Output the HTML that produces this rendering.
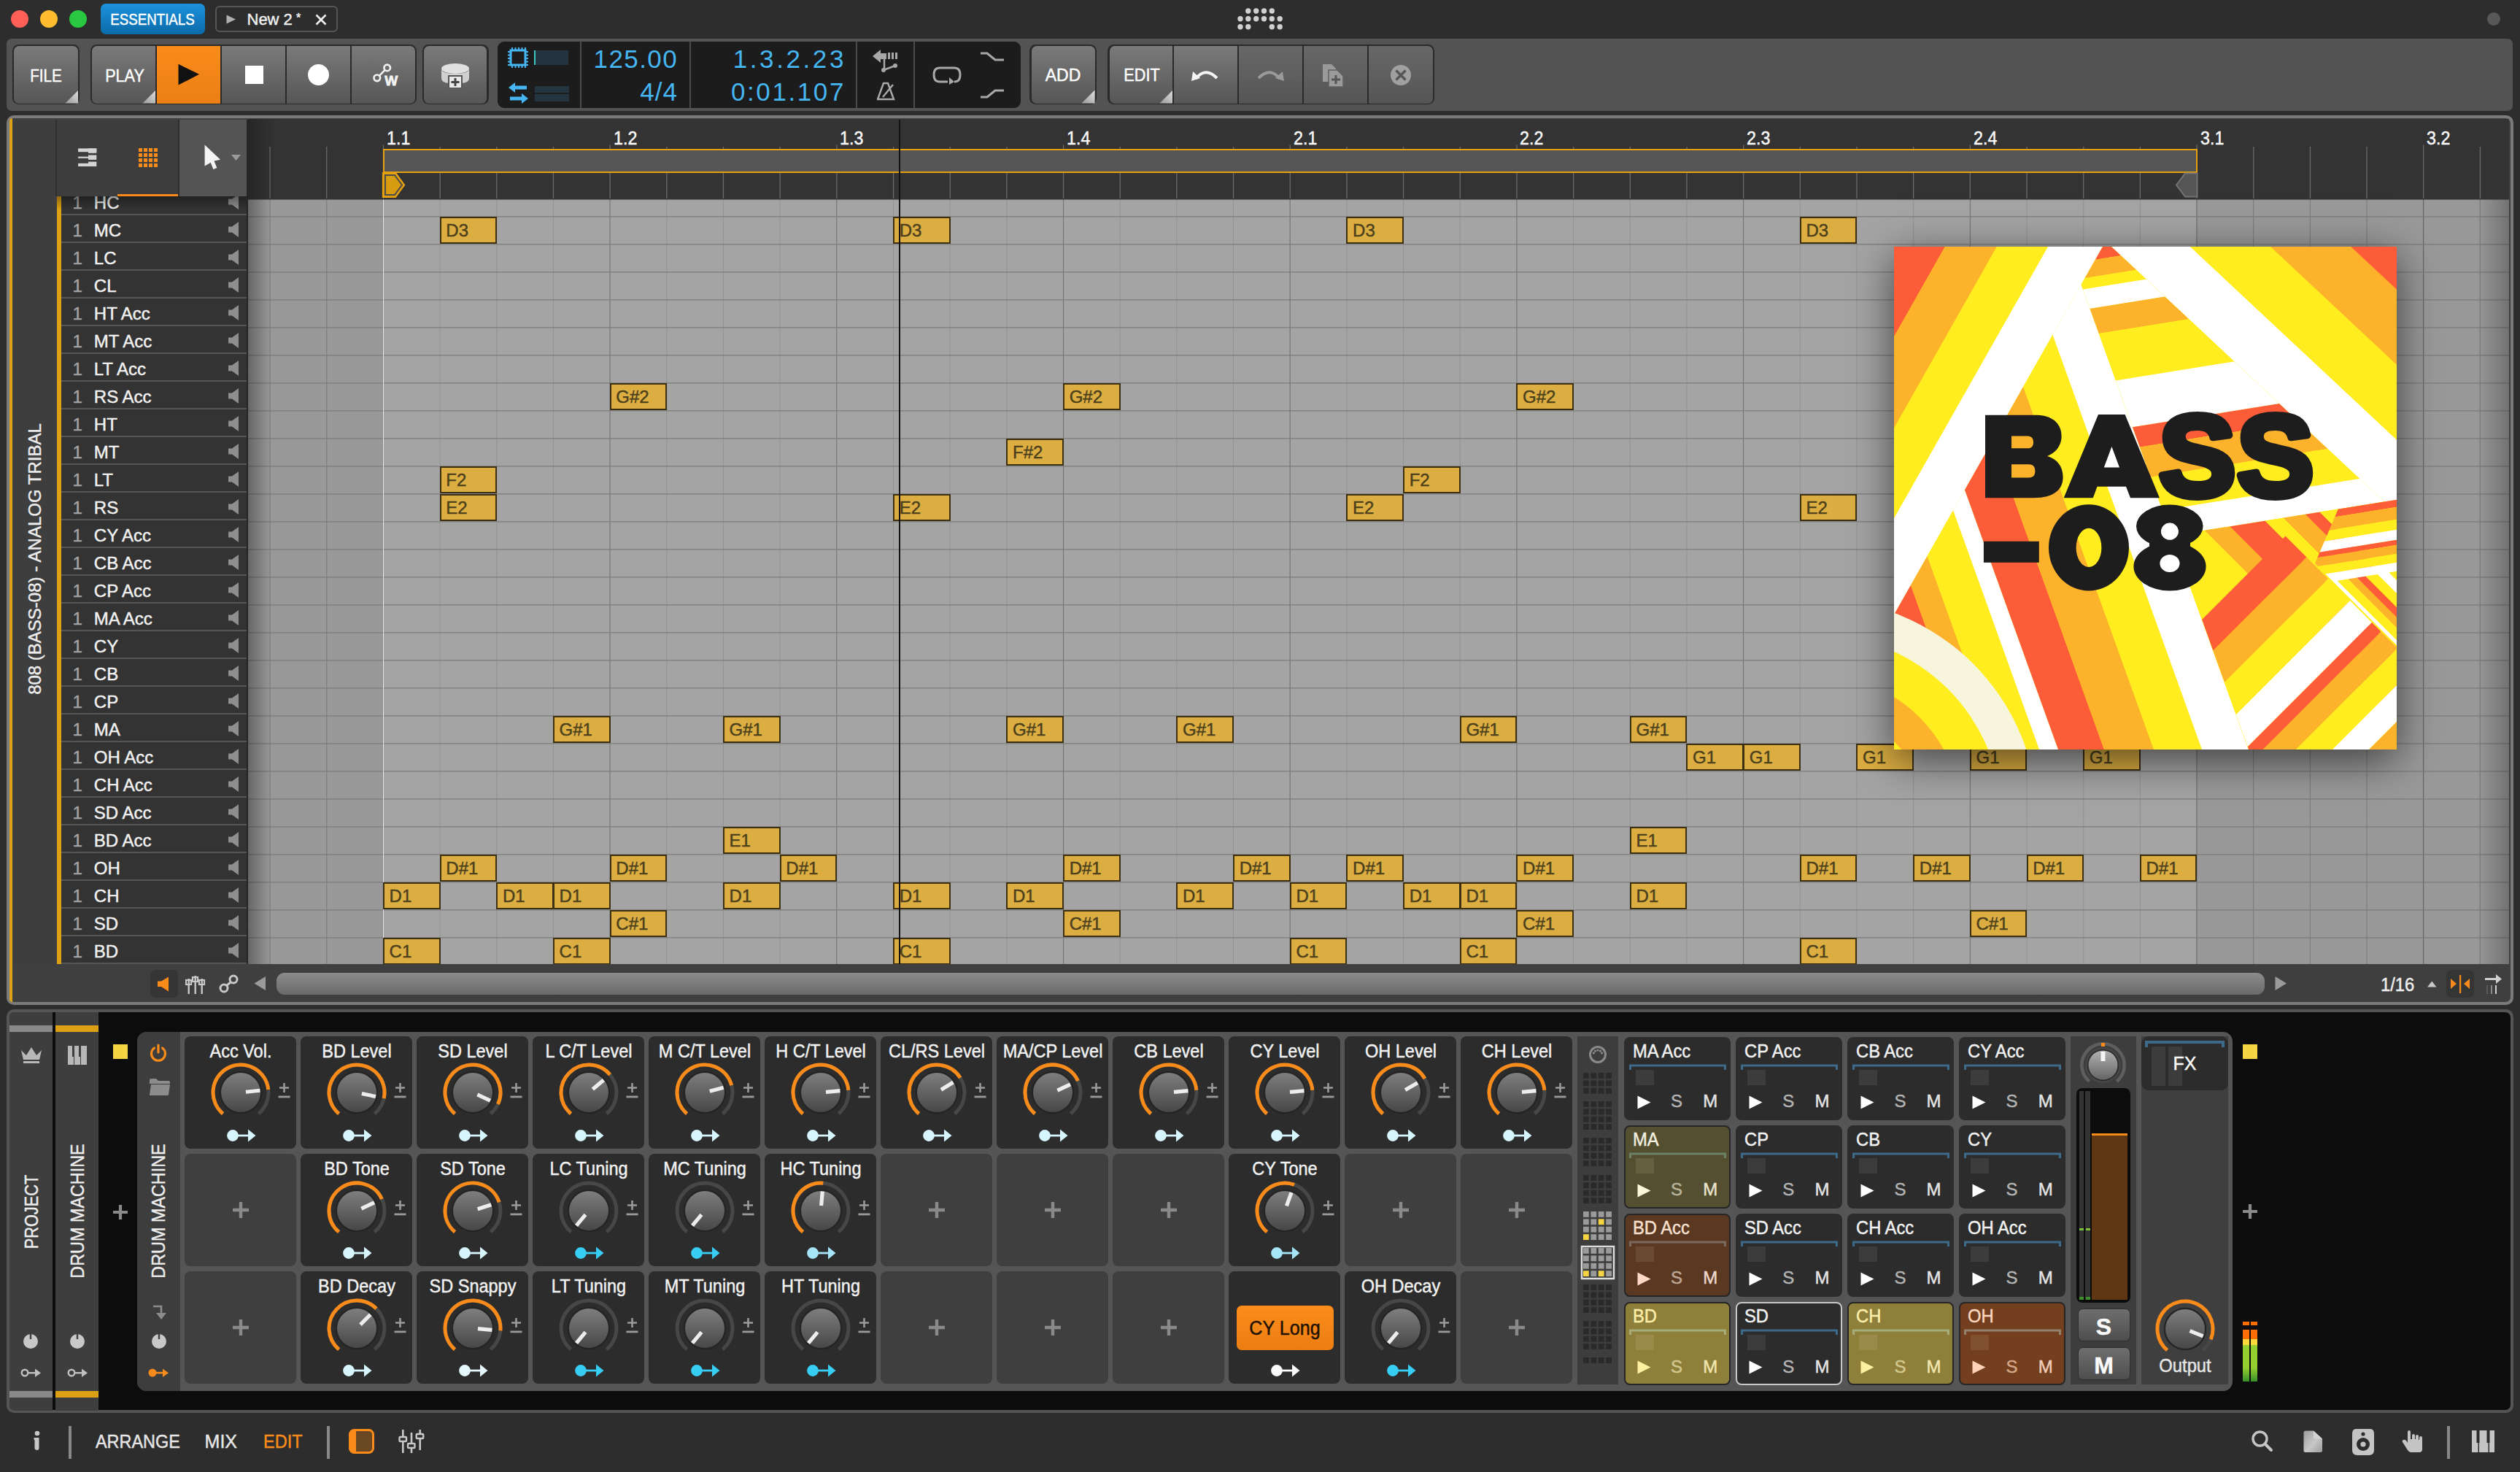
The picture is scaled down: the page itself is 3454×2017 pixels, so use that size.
<!DOCTYPE html>
<html><head><meta charset="utf-8"><style>
html,body{margin:0;padding:0;}
body{width:3454px;height:2017px;overflow:hidden;background:#2d2d2d;position:relative;font-family:"Liberation Sans",sans-serif;}
div{position:absolute;box-sizing:border-box;}
.t{white-space:nowrap;-webkit-text-stroke:0.45px currentColor;}
</style></head><body>
<div style="left:15.0px;top:14.0px;width:24.0px;height:24.0px;border-radius:50%;background:#fe5f57;"></div>
<div style="left:54.7px;top:14.0px;width:24.0px;height:24.0px;border-radius:50%;background:#febc2e;"></div>
<div style="left:94.7px;top:14.0px;width:24.0px;height:24.0px;border-radius:50%;background:#28c840;"></div>
<div style="left:138.0px;top:5.0px;width:142.6px;height:42.0px;border-radius:7px;background:linear-gradient(#1c92dc,#0b6aa9);"></div>
<div class="t" style="left:129.3px;top:16.4px;width:160px;text-align:center;font-size:22px;line-height:22px;color:#fff;transform:scaleX(0.85);transform-origin:center;">ESSENTIALS</div>
<div style="left:295.0px;top:8.0px;width:168.0px;height:36.0px;border:2px solid #565656;border-radius:6px;"></div>
<svg style="position:absolute;left:310.0px;top:20.0px;" width="14.0" height="13.0" viewBox="0 0 14.0 13.0"><polygon points="0.5,0.5 13,6.5 0.5,12.5" fill="#b0b0b0"/></svg>
<div class="t" style="left:338.5px;top:16.4px;font-size:22px;line-height:22px;color:#f0f0f0;transform:scaleX(1.0);transform-origin:left;">New 2</div>
<div class="t" style="left:406.0px;top:16.5px;font-size:16px;line-height:16px;color:#f0f0f0;">*</div>
<svg style="position:absolute;left:432.0px;top:19.0px;" width="16.0" height="16.0" viewBox="0 0 16.0 16.0"><path d="M1.5,1.5 L14.5,14.5 M14.5,1.5 L1.5,14.5" stroke="#f0f0f0" stroke-width="2.6"/></svg>
<svg style="position:absolute;left:1690.0px;top:5.0px;" width="75.0" height="42.0" viewBox="0 0 75.0 42.0"><circle cx="20.8" cy="10.0" r="3.7" fill="#cfcfcf"/><circle cx="31.7" cy="10.0" r="3.7" fill="#cfcfcf"/><circle cx="42.5" cy="10.0" r="3.7" fill="#cfcfcf"/><circle cx="53.3" cy="10.0" r="3.7" fill="#cfcfcf"/><circle cx="10.0" cy="20.8" r="3.7" fill="#cfcfcf"/><circle cx="20.8" cy="20.8" r="3.7" fill="#cfcfcf"/><circle cx="31.7" cy="20.8" r="3.7" fill="#cfcfcf"/><circle cx="42.5" cy="20.8" r="3.7" fill="#cfcfcf"/><circle cx="53.3" cy="20.8" r="3.7" fill="#cfcfcf"/><circle cx="64.2" cy="20.8" r="3.7" fill="#cfcfcf"/><circle cx="10.0" cy="31.7" r="3.7" fill="#cfcfcf"/><circle cx="20.8" cy="31.7" r="3.7" fill="#cfcfcf"/><circle cx="53.3" cy="31.7" r="3.7" fill="#cfcfcf"/><circle cx="64.2" cy="31.7" r="3.7" fill="#cfcfcf"/></svg>
<div style="left:3409.0px;top:17.0px;width:18.0px;height:18.0px;border-radius:50%;background:#585858;"></div>
<div style="left:9.0px;top:53.0px;width:3435.0px;height:98.5px;border-radius:7px;background:#535353;"></div>
<div style="left:17.0px;top:61.3px;width:92.0px;height:82.0px;border-radius:8.5px;background:#2a2a2a;"></div>
<div style="left:19.0px;top:62.8px;width:88.0px;height:79.0px;border-radius:7px 7px 7px 7px;background:linear-gradient(#7a7a7a,#565656);"></div>
<div class="t" style="left:13.0px;top:91.7px;width:100px;text-align:center;font-size:24px;line-height:24px;color:#fff;transform:scaleX(0.86);transform-origin:center;">FILE</div>
<svg style="position:absolute;left:88.5px;top:123.3px;overflow:hidden;" width="18.5" height="18.5" viewBox="0 0 18.5 18.5"><defs><linearGradient id="cg" x1="0" y1="1" x2="1" y2="0"><stop offset="0" stop-color="#9a9a9a"/><stop offset="1" stop-color="#e0e0e0"/></linearGradient></defs><polygon points="0.5,18.5 18.5,18.5 18.5,0.5" fill="url(#cg)"/></svg>
<div style="left:124.1px;top:61.3px;width:447.0px;height:82.0px;border-radius:8.5px;background:#2a2a2a;"></div>
<div style="left:126.0px;top:62.8px;width:87.0px;height:79.0px;border-radius:7px 0 0 7px;background:linear-gradient(#7a7a7a,#565656);"></div>
<div style="left:215.0px;top:62.8px;width:87.0px;height:79.0px;border-radius:0 0 0 0;background:linear-gradient(#fa8c1a,#ec7f15);"></div>
<div style="left:304.0px;top:62.8px;width:87.0px;height:79.0px;border-radius:0 0 0 0;background:linear-gradient(#7a7a7a,#565656);"></div>
<div style="left:393.0px;top:62.8px;width:87.0px;height:79.0px;border-radius:0 0 0 0;background:linear-gradient(#7a7a7a,#565656);"></div>
<div style="left:482.0px;top:62.8px;width:87.0px;height:79.0px;border-radius:0 7px 7px 0;background:linear-gradient(#7a7a7a,#565656);"></div>
<div class="t" style="left:120.5px;top:91.7px;width:100px;text-align:center;font-size:24px;line-height:24px;color:#fff;transform:scaleX(0.9);transform-origin:center;">PLAY</div>
<svg style="position:absolute;left:194.5px;top:123.3px;overflow:hidden;" width="18.5" height="18.5" viewBox="0 0 18.5 18.5"><defs><linearGradient id="cg" x1="0" y1="1" x2="1" y2="0"><stop offset="0" stop-color="#9a9a9a"/><stop offset="1" stop-color="#e0e0e0"/></linearGradient></defs><polygon points="0.5,18.5 18.5,18.5 18.5,0.5" fill="url(#cg)"/></svg>
<svg style="position:absolute;left:244.0px;top:87.0px;" width="30.0" height="30.0" viewBox="0 0 30.0 30.0"><polygon points="0.5,0.8 29,14.7 0.5,29.6" fill="#111"/></svg>
<div style="left:335.8px;top:89.7px;width:25.0px;height:25.0px;background:#fff;"></div>
<div style="left:421.8px;top:87.7px;width:29.4px;height:29.4px;border-radius:50%;background:#fff;"></div>
<svg style="position:absolute;left:505.0px;top:85.0px;" width="45.0" height="38.0" viewBox="0 0 45.0 38.0"><circle cx="11.8" cy="21.8" r="4.3" fill="none" stroke="#f2f2f2" stroke-width="2.6"/><circle cx="25.7" cy="7.9" r="4.3" fill="none" stroke="#f2f2f2" stroke-width="2.6"/><line x1="14.8" y1="18.8" x2="22.7" y2="10.9" stroke="#f2f2f2" stroke-width="2.6"/><text x="22.3" y="32" font-family="Liberation Sans" font-weight="bold" font-size="19" fill="#f2f2f2" stroke="#f2f2f2" stroke-width="0.8">W</text></svg>
<div style="left:578.5px;top:61.3px;width:91.0px;height:82.0px;border-radius:8.5px;background:#2a2a2a;"></div>
<div style="left:581.0px;top:62.8px;width:86.0px;height:79.0px;border-radius:7px 7px 7px 7px;background:linear-gradient(#7a7a7a,#565656);"></div>
<svg style="position:absolute;left:603.0px;top:85.0px;" width="42.0" height="36.0" viewBox="0 0 42.0 36.0"><ellipse cx="21" cy="9" rx="19" ry="7" fill="#e0e0e0"/><path d="M2,9 L2,22 Q2,28 12,29 L12,36 L30,36 L30,29 Q40,28 40,22 L40,9 Q40,16 21,16 Q2,16 2,9Z" fill="#d0d0d0"/><rect x="12" y="19" width="18" height="17" fill="#e8e8e8" stroke="#555" stroke-width="2"/><path d="M21,22 L21,33 M15.5,27.5 L26.5,27.5" stroke="#444" stroke-width="3"/></svg>
<div style="left:682.0px;top:57.0px;width:717.0px;height:90.6px;border-radius:9px;background:#1c1c1c;"></div>
<div style="left:795.0px;top:57.0px;width:2.0px;height:90.6px;background:#4a4a4a;"></div>
<div style="left:945.0px;top:57.0px;width:2.0px;height:90.6px;background:#4a4a4a;"></div>
<div style="left:1173.0px;top:57.0px;width:2.0px;height:90.6px;background:#4a4a4a;"></div>
<div style="left:1252.0px;top:57.0px;width:2.0px;height:90.6px;background:#4a4a4a;"></div>
<svg style="position:absolute;left:695.0px;top:64.0px;" width="30.0" height="30.0" viewBox="0 0 30.0 30.0"><rect x="5" y="5" width="20" height="20" fill="none" stroke="#45b6f2" stroke-width="3"/><rect x="6.0" y="1" width="2" height="3" fill="#45b6f2"/><rect x="6.0" y="26" width="2" height="3" fill="#45b6f2"/><rect x="1" y="6.0" width="3" height="2" fill="#45b6f2"/><rect x="26" y="6.0" width="3" height="2" fill="#45b6f2"/><rect x="10.5" y="1" width="2" height="3" fill="#45b6f2"/><rect x="10.5" y="26" width="2" height="3" fill="#45b6f2"/><rect x="1" y="10.5" width="3" height="2" fill="#45b6f2"/><rect x="26" y="10.5" width="3" height="2" fill="#45b6f2"/><rect x="15.0" y="1" width="2" height="3" fill="#45b6f2"/><rect x="15.0" y="26" width="2" height="3" fill="#45b6f2"/><rect x="1" y="15.0" width="3" height="2" fill="#45b6f2"/><rect x="26" y="15.0" width="3" height="2" fill="#45b6f2"/><rect x="19.5" y="1" width="2" height="3" fill="#45b6f2"/><rect x="19.5" y="26" width="2" height="3" fill="#45b6f2"/><rect x="1" y="19.5" width="3" height="2" fill="#45b6f2"/><rect x="26" y="19.5" width="3" height="2" fill="#45b6f2"/><rect x="24.0" y="1" width="2" height="3" fill="#45b6f2"/><rect x="24.0" y="26" width="2" height="3" fill="#45b6f2"/><rect x="1" y="24.0" width="3" height="2" fill="#45b6f2"/><rect x="26" y="24.0" width="3" height="2" fill="#45b6f2"/></svg>
<div style="left:732.0px;top:69.0px;width:47.0px;height:20.0px;background:#243540;"></div>
<div style="left:732.0px;top:69.0px;width:1.5px;height:20.0px;background:#3fc4c4;"></div>
<svg style="position:absolute;left:697.0px;top:113.0px;" width="27.0" height="29.0" viewBox="0 0 27.0 29.0"><polygon points="0,7 9,0 9,4.5 25,4.5 25,9.5 9,9.5 9,14" fill="#45b6f2"/><polygon points="27,22 18,29 18,24.5 2,24.5 2,19.5 18,19.5 18,15" fill="#45b6f2"/></svg>
<div style="left:733.0px;top:118.0px;width:47.0px;height:9.0px;background:#243540;"></div>
<div style="left:733.0px;top:129.0px;width:47.0px;height:9.5px;background:#243540;"></div>
<div class="t" style="left:729.0px;top:63.1px;width:200px;text-align:right;font-size:35px;line-height:35px;color:#45b6f2;letter-spacing:1.4px;-webkit-text-stroke:0;">125.00</div>
<div class="t" style="left:729.0px;top:107.7px;width:200px;text-align:right;font-size:35px;line-height:35px;color:#45b6f2;letter-spacing:1px;-webkit-text-stroke:0;">4/4</div>
<div class="t" style="left:910.0px;top:63.1px;width:250px;text-align:right;font-size:35px;line-height:35px;color:#45b6f2;letter-spacing:3.6px;-webkit-text-stroke:0;">1.3.2.23</div>
<div class="t" style="left:909.0px;top:107.7px;width:250px;text-align:right;font-size:35px;line-height:35px;color:#45b6f2;letter-spacing:2.6px;-webkit-text-stroke:0;">0:01.107</div>
<svg style="position:absolute;left:1196.0px;top:67.0px;" width="38.0" height="34.0" viewBox="0 0 38.0 34.0"><polygon points="0,10 11,1 11,6 19,6 19,14 11,14 11,19" fill="#a8a8a8"/><rect x="21" y="5" width="3" height="9" fill="#a8a8a8"/><rect x="26" y="5" width="3" height="9" fill="#a8a8a8"/><rect x="31" y="5" width="3" height="9" fill="#a8a8a8"/><circle cx="15" cy="29" r="3" fill="#a8a8a8"/><circle cx="31" cy="23" r="3" fill="#a8a8a8"/><line x1="15" y1="29" x2="31" y2="23" stroke="#a8a8a8" stroke-width="2.5"/><line x1="16" y1="14" x2="16" y2="27" stroke="#a8a8a8" stroke-width="2.5"/></svg>
<svg style="position:absolute;left:1202.0px;top:112.0px;" width="26.0" height="26.0" viewBox="0 0 26.0 26.0"><polygon points="9,2 15,2 23,24 1,24" fill="none" stroke="#a8a8a8" stroke-width="2.5"/><line x1="8" y1="21" x2="22" y2="4" stroke="#a8a8a8" stroke-width="2.5"/></svg>
<svg style="position:absolute;left:1277.0px;top:89.0px;" width="42.0" height="27.0" viewBox="0 0 42.0 27.0"><path d="M22,23 L11,23 Q3,23 3,13.5 Q3,4 11,4 L31,4 Q39,4 39,13.5 Q39,23 31,23" fill="none" stroke="#a8a8a8" stroke-width="3"/><polygon points="24,17 24,27 31,23" fill="#a8a8a8"/></svg>
<svg style="position:absolute;left:1343.0px;top:70.0px;" width="34.0" height="16.0" viewBox="0 0 34.0 16.0"><path d="M1,3 L10,3 L21,12 L33,12" fill="none" stroke="#a8a8a8" stroke-width="3"/></svg>
<svg style="position:absolute;left:1343.0px;top:120.0px;" width="34.0" height="16.0" viewBox="0 0 34.0 16.0"><path d="M1,13 L10,13 L21,4 L33,4" fill="none" stroke="#a8a8a8" stroke-width="3"/></svg>
<div style="left:1411.2px;top:61.3px;width:91.8px;height:82.0px;border-radius:8.5px;background:#2a2a2a;"></div>
<div style="left:1413.5px;top:62.8px;width:87.0px;height:79.0px;border-radius:7px 7px 7px 7px;background:linear-gradient(#7a7a7a,#565656);"></div>
<div class="t" style="left:1407.0px;top:92.2px;width:100px;text-align:center;font-size:23px;line-height:23px;color:#fff;">ADD</div>
<svg style="position:absolute;left:1482.0px;top:123.3px;overflow:hidden;" width="18.5" height="18.5" viewBox="0 0 18.5 18.5"><defs><linearGradient id="cg" x1="0" y1="1" x2="1" y2="0"><stop offset="0" stop-color="#9a9a9a"/><stop offset="1" stop-color="#e0e0e0"/></linearGradient></defs><polygon points="0.5,18.5 18.5,18.5 18.5,0.5" fill="url(#cg)"/></svg>
<div style="left:1518.2px;top:61.3px;width:447.7px;height:82.0px;border-radius:8.5px;background:#2a2a2a;"></div>
<div style="left:1520.5px;top:62.8px;width:86.5px;height:79.0px;border-radius:7px 0 0 7px;background:linear-gradient(#7a7a7a,#565656);"></div>
<div style="left:1609.0px;top:62.8px;width:87.0px;height:79.0px;border-radius:0 0 0 0;background:linear-gradient(#7a7a7a,#565656);"></div>
<div style="left:1698.0px;top:62.8px;width:87.0px;height:79.0px;border-radius:0 0 0 0;background:linear-gradient(#686868,#555);"></div>
<div style="left:1787.0px;top:62.8px;width:87.0px;height:79.0px;border-radius:0 0 0 0;background:linear-gradient(#686868,#555);"></div>
<div style="left:1876.0px;top:62.8px;width:87.5px;height:79.0px;border-radius:0 7px 7px 0;background:linear-gradient(#686868,#555);"></div>
<div class="t" style="left:1515.0px;top:92.2px;width:100px;text-align:center;font-size:23px;line-height:23px;color:#fff;transform:scaleX(0.94);transform-origin:center;">EDIT</div>
<svg style="position:absolute;left:1588.5px;top:123.3px;overflow:hidden;" width="18.5" height="18.5" viewBox="0 0 18.5 18.5"><defs><linearGradient id="cg" x1="0" y1="1" x2="1" y2="0"><stop offset="0" stop-color="#9a9a9a"/><stop offset="1" stop-color="#e0e0e0"/></linearGradient></defs><polygon points="0.5,18.5 18.5,18.5 18.5,0.5" fill="url(#cg)"/></svg>
<svg style="position:absolute;left:1632.0px;top:90.0px;" width="40.0" height="24.0" viewBox="0 0 40.0 24.0"><path d="M7,18 Q20,1 36,17" fill="none" stroke="#f4f4f4" stroke-width="4"/><polygon points="1,21 3,8 13,17" fill="#f4f4f4"/></svg>
<svg style="position:absolute;left:1721.0px;top:90.0px;" width="40.0" height="24.0" viewBox="0 0 40.0 24.0"><path d="M33,18 Q20,1 4,17" fill="none" stroke="#9a9a9a" stroke-width="4"/><polygon points="39,21 37,8 27,17" fill="#9a9a9a"/></svg>
<svg style="position:absolute;left:1811.0px;top:86.0px;" width="36.0" height="34.0" viewBox="0 0 36.0 34.0"><path d="M2,2 L14,2 L20,8 L20,26 L2,26Z" fill="#9a9a9a"/><path d="M10,10 L22,10 L30,18 L30,33 L10,33Z" fill="#9a9a9a" stroke="#606060" stroke-width="1.5"/><path d="M20,17 L20,29 M14,23 L26,23" stroke="#555" stroke-width="3"/></svg>
<svg style="position:absolute;left:1903.0px;top:86.0px;" width="34.0" height="34.0" viewBox="0 0 34.0 34.0"><circle cx="17" cy="17" r="14" fill="#a0a0a0"/><path d="M10.5,10.5 L23.5,23.5 M23.5,10.5 L10.5,23.5" stroke="#575757" stroke-width="3.5"/></svg>
<div style="left:9.0px;top:158.0px;width:3436.0px;height:1219.0px;border-radius:10px;background:#7b7b7b;"></div>
<div style="left:13.0px;top:162.0px;width:3428.0px;height:1211.0px;border-radius:7px;background:#3f3f3f;"></div>
<div style="left:13.0px;top:162.0px;width:4.0px;height:1211.0px;background:#dca114;border-radius:6px 0 0 6px;"></div>
<div style="left:17.0px;top:162.0px;width:60.0px;height:1160.0px;background:#3e3e3e;"></div>
<div class="t" style="left:48px;top:766px;width:0;height:0;"><div style="left:-300px;top:-14px;width:600px;text-align:center;font-size:24px;line-height:28px;color:#ececec;transform:rotate(-90deg);transform-origin:300px 14px;">808 (BASS-08) - ANALOG TRIBAL</div></div>
<div style="left:76.0px;top:164.0px;width:2.0px;height:105.0px;background:#2f2f2f;"></div>
<div style="left:78.0px;top:164.0px;width:167.0px;height:105.0px;background:#3d3d3d;"></div>
<div style="left:246.0px;top:164.0px;width:92.0px;height:105.0px;background:#545454;"></div>
<div style="left:161.0px;top:265.5px;width:83.5px;height:4.0px;background:#f98b1b;"></div>
<svg style="position:absolute;left:100.0px;top:198.0px;" width="40.0" height="36.0" viewBox="0 0 40.0 36.0"><rect x="7.1" y="5.4" width="25.2" height="4.8" fill="#d4d4d4"/><rect x="21.0" y="5.4" width="11.3" height="6.4" fill="#d4d4d4"/><rect x="21.0" y="14.5" width="11.3" height="6.4" fill="#d4d4d4"/><rect x="7.1" y="16.6" width="13.9" height="2.2" fill="#d4d4d4"/><rect x="21.0" y="23.6" width="11.3" height="6.4" fill="#d4d4d4"/><rect x="7.1" y="25.8" width="13.9" height="4.2" fill="#d4d4d4"/></svg>
<svg style="position:absolute;left:189.0px;top:202.0px;" width="28.0" height="28.0" viewBox="0 0 28.0 28.0"><rect x="1" y="1" width="5" height="5" fill="#f98b1b"/><rect x="1" y="8" width="5" height="5" fill="#f98b1b"/><rect x="1" y="15" width="5" height="5" fill="#f98b1b"/><rect x="1" y="22" width="5" height="5" fill="#f98b1b"/><rect x="8" y="1" width="5" height="5" fill="#f98b1b"/><rect x="8" y="8" width="5" height="5" fill="#f98b1b"/><rect x="8" y="15" width="5" height="5" fill="#f98b1b"/><rect x="8" y="22" width="5" height="5" fill="#f98b1b"/><rect x="15" y="1" width="5" height="5" fill="#f98b1b"/><rect x="15" y="8" width="5" height="5" fill="#f98b1b"/><rect x="15" y="15" width="5" height="5" fill="#f98b1b"/><rect x="15" y="22" width="5" height="5" fill="#f98b1b"/><rect x="22" y="1" width="5" height="5" fill="#f98b1b"/><rect x="22" y="8" width="5" height="5" fill="#f98b1b"/><rect x="22" y="15" width="5" height="5" fill="#f98b1b"/><rect x="22" y="22" width="5" height="5" fill="#f98b1b"/></svg>
<div style="left:244.0px;top:164.0px;width:2.0px;height:105.0px;background:#2e2e2e;"></div>
<svg style="position:absolute;left:278.0px;top:197.0px;" width="28.0" height="38.0" viewBox="0 0 28.0 38.0"><polygon points="2.6,1.6 2.6,30.5 10.7,25.7 14.4,35 19.3,32.9 15.5,23.5 24.1,21.7" fill="#f4f4f4"/></svg>
<svg style="position:absolute;left:317.0px;top:212.0px;" width="14.0" height="9.0" viewBox="0 0 14.0 9.0"><polygon points="0,0 13,0 6.5,8" fill="#9a9a9a"/></svg>
<div style="left:78px;top:269px;width:260px;height:1052px;overflow:hidden;background:#333;">
<div style="left:0;top:0;width:6px;height:1052px;background:#dca114;"></div>
<div style="left:6px;top:24.2px;width:254px;height:1.6px;background:#555;"></div>
<div class="t" style="left:21.5px;top:-3.1px;font-size:24px;line-height:24px;color:#a3a3a3;">1</div>
<div class="t" style="left:50.8px;top:-3.1px;font-size:24px;line-height:24px;color:#f2f2f2;">HC</div>
<svg style="position:absolute;left:235px;top:-3.0px" width="15" height="21" viewBox="0 0 15 21"><polygon points="0,6.5 5,6.5 14,0 14,21 5,14.5 0,14.5" fill="#8e8e8e"/></svg>
<div style="left:6px;top:62.2px;width:254px;height:1.6px;background:#555;"></div>
<div class="t" style="left:21.5px;top:34.9px;font-size:24px;line-height:24px;color:#a3a3a3;">1</div>
<div class="t" style="left:50.8px;top:34.9px;font-size:24px;line-height:24px;color:#f2f2f2;">MC</div>
<svg style="position:absolute;left:235px;top:35.0px" width="15" height="21" viewBox="0 0 15 21"><polygon points="0,6.5 5,6.5 14,0 14,21 5,14.5 0,14.5" fill="#8e8e8e"/></svg>
<div style="left:6px;top:100.2px;width:254px;height:1.6px;background:#555;"></div>
<div class="t" style="left:21.5px;top:72.9px;font-size:24px;line-height:24px;color:#a3a3a3;">1</div>
<div class="t" style="left:50.8px;top:72.9px;font-size:24px;line-height:24px;color:#f2f2f2;">LC</div>
<svg style="position:absolute;left:235px;top:73.0px" width="15" height="21" viewBox="0 0 15 21"><polygon points="0,6.5 5,6.5 14,0 14,21 5,14.5 0,14.5" fill="#8e8e8e"/></svg>
<div style="left:6px;top:138.2px;width:254px;height:1.6px;background:#555;"></div>
<div class="t" style="left:21.5px;top:110.9px;font-size:24px;line-height:24px;color:#a3a3a3;">1</div>
<div class="t" style="left:50.8px;top:110.9px;font-size:24px;line-height:24px;color:#f2f2f2;">CL</div>
<svg style="position:absolute;left:235px;top:111.0px" width="15" height="21" viewBox="0 0 15 21"><polygon points="0,6.5 5,6.5 14,0 14,21 5,14.5 0,14.5" fill="#8e8e8e"/></svg>
<div style="left:6px;top:176.2px;width:254px;height:1.6px;background:#555;"></div>
<div class="t" style="left:21.5px;top:148.9px;font-size:24px;line-height:24px;color:#a3a3a3;">1</div>
<div class="t" style="left:50.8px;top:148.9px;font-size:24px;line-height:24px;color:#f2f2f2;">HT Acc</div>
<svg style="position:absolute;left:235px;top:149.0px" width="15" height="21" viewBox="0 0 15 21"><polygon points="0,6.5 5,6.5 14,0 14,21 5,14.5 0,14.5" fill="#8e8e8e"/></svg>
<div style="left:6px;top:214.2px;width:254px;height:1.6px;background:#555;"></div>
<div class="t" style="left:21.5px;top:186.9px;font-size:24px;line-height:24px;color:#a3a3a3;">1</div>
<div class="t" style="left:50.8px;top:186.9px;font-size:24px;line-height:24px;color:#f2f2f2;">MT Acc</div>
<svg style="position:absolute;left:235px;top:187.0px" width="15" height="21" viewBox="0 0 15 21"><polygon points="0,6.5 5,6.5 14,0 14,21 5,14.5 0,14.5" fill="#8e8e8e"/></svg>
<div style="left:6px;top:252.2px;width:254px;height:1.6px;background:#555;"></div>
<div class="t" style="left:21.5px;top:224.9px;font-size:24px;line-height:24px;color:#a3a3a3;">1</div>
<div class="t" style="left:50.8px;top:224.9px;font-size:24px;line-height:24px;color:#f2f2f2;">LT Acc</div>
<svg style="position:absolute;left:235px;top:225.0px" width="15" height="21" viewBox="0 0 15 21"><polygon points="0,6.5 5,6.5 14,0 14,21 5,14.5 0,14.5" fill="#8e8e8e"/></svg>
<div style="left:6px;top:290.2px;width:254px;height:1.6px;background:#555;"></div>
<div class="t" style="left:21.5px;top:262.9px;font-size:24px;line-height:24px;color:#a3a3a3;">1</div>
<div class="t" style="left:50.8px;top:262.9px;font-size:24px;line-height:24px;color:#f2f2f2;">RS Acc</div>
<svg style="position:absolute;left:235px;top:263.0px" width="15" height="21" viewBox="0 0 15 21"><polygon points="0,6.5 5,6.5 14,0 14,21 5,14.5 0,14.5" fill="#8e8e8e"/></svg>
<div style="left:6px;top:328.2px;width:254px;height:1.6px;background:#555;"></div>
<div class="t" style="left:21.5px;top:300.9px;font-size:24px;line-height:24px;color:#a3a3a3;">1</div>
<div class="t" style="left:50.8px;top:300.9px;font-size:24px;line-height:24px;color:#f2f2f2;">HT</div>
<svg style="position:absolute;left:235px;top:301.0px" width="15" height="21" viewBox="0 0 15 21"><polygon points="0,6.5 5,6.5 14,0 14,21 5,14.5 0,14.5" fill="#8e8e8e"/></svg>
<div style="left:6px;top:366.2px;width:254px;height:1.6px;background:#555;"></div>
<div class="t" style="left:21.5px;top:338.9px;font-size:24px;line-height:24px;color:#a3a3a3;">1</div>
<div class="t" style="left:50.8px;top:338.9px;font-size:24px;line-height:24px;color:#f2f2f2;">MT</div>
<svg style="position:absolute;left:235px;top:339.0px" width="15" height="21" viewBox="0 0 15 21"><polygon points="0,6.5 5,6.5 14,0 14,21 5,14.5 0,14.5" fill="#8e8e8e"/></svg>
<div style="left:6px;top:404.2px;width:254px;height:1.6px;background:#555;"></div>
<div class="t" style="left:21.5px;top:376.9px;font-size:24px;line-height:24px;color:#a3a3a3;">1</div>
<div class="t" style="left:50.8px;top:376.9px;font-size:24px;line-height:24px;color:#f2f2f2;">LT</div>
<svg style="position:absolute;left:235px;top:377.0px" width="15" height="21" viewBox="0 0 15 21"><polygon points="0,6.5 5,6.5 14,0 14,21 5,14.5 0,14.5" fill="#8e8e8e"/></svg>
<div style="left:6px;top:442.2px;width:254px;height:1.6px;background:#555;"></div>
<div class="t" style="left:21.5px;top:414.9px;font-size:24px;line-height:24px;color:#a3a3a3;">1</div>
<div class="t" style="left:50.8px;top:414.9px;font-size:24px;line-height:24px;color:#f2f2f2;">RS</div>
<svg style="position:absolute;left:235px;top:415.0px" width="15" height="21" viewBox="0 0 15 21"><polygon points="0,6.5 5,6.5 14,0 14,21 5,14.5 0,14.5" fill="#8e8e8e"/></svg>
<div style="left:6px;top:480.2px;width:254px;height:1.6px;background:#555;"></div>
<div class="t" style="left:21.5px;top:452.9px;font-size:24px;line-height:24px;color:#a3a3a3;">1</div>
<div class="t" style="left:50.8px;top:452.9px;font-size:24px;line-height:24px;color:#f2f2f2;">CY Acc</div>
<svg style="position:absolute;left:235px;top:453.0px" width="15" height="21" viewBox="0 0 15 21"><polygon points="0,6.5 5,6.5 14,0 14,21 5,14.5 0,14.5" fill="#8e8e8e"/></svg>
<div style="left:6px;top:518.2px;width:254px;height:1.6px;background:#555;"></div>
<div class="t" style="left:21.5px;top:490.9px;font-size:24px;line-height:24px;color:#a3a3a3;">1</div>
<div class="t" style="left:50.8px;top:490.9px;font-size:24px;line-height:24px;color:#f2f2f2;">CB Acc</div>
<svg style="position:absolute;left:235px;top:491.0px" width="15" height="21" viewBox="0 0 15 21"><polygon points="0,6.5 5,6.5 14,0 14,21 5,14.5 0,14.5" fill="#8e8e8e"/></svg>
<div style="left:6px;top:556.2px;width:254px;height:1.6px;background:#555;"></div>
<div class="t" style="left:21.5px;top:528.9px;font-size:24px;line-height:24px;color:#a3a3a3;">1</div>
<div class="t" style="left:50.8px;top:528.9px;font-size:24px;line-height:24px;color:#f2f2f2;">CP Acc</div>
<svg style="position:absolute;left:235px;top:529.0px" width="15" height="21" viewBox="0 0 15 21"><polygon points="0,6.5 5,6.5 14,0 14,21 5,14.5 0,14.5" fill="#8e8e8e"/></svg>
<div style="left:6px;top:594.2px;width:254px;height:1.6px;background:#555;"></div>
<div class="t" style="left:21.5px;top:566.9px;font-size:24px;line-height:24px;color:#a3a3a3;">1</div>
<div class="t" style="left:50.8px;top:566.9px;font-size:24px;line-height:24px;color:#f2f2f2;">MA Acc</div>
<svg style="position:absolute;left:235px;top:567.0px" width="15" height="21" viewBox="0 0 15 21"><polygon points="0,6.5 5,6.5 14,0 14,21 5,14.5 0,14.5" fill="#8e8e8e"/></svg>
<div style="left:6px;top:632.2px;width:254px;height:1.6px;background:#555;"></div>
<div class="t" style="left:21.5px;top:604.9px;font-size:24px;line-height:24px;color:#a3a3a3;">1</div>
<div class="t" style="left:50.8px;top:604.9px;font-size:24px;line-height:24px;color:#f2f2f2;">CY</div>
<svg style="position:absolute;left:235px;top:605.0px" width="15" height="21" viewBox="0 0 15 21"><polygon points="0,6.5 5,6.5 14,0 14,21 5,14.5 0,14.5" fill="#8e8e8e"/></svg>
<div style="left:6px;top:670.2px;width:254px;height:1.6px;background:#555;"></div>
<div class="t" style="left:21.5px;top:642.9px;font-size:24px;line-height:24px;color:#a3a3a3;">1</div>
<div class="t" style="left:50.8px;top:642.9px;font-size:24px;line-height:24px;color:#f2f2f2;">CB</div>
<svg style="position:absolute;left:235px;top:643.0px" width="15" height="21" viewBox="0 0 15 21"><polygon points="0,6.5 5,6.5 14,0 14,21 5,14.5 0,14.5" fill="#8e8e8e"/></svg>
<div style="left:6px;top:708.2px;width:254px;height:1.6px;background:#555;"></div>
<div class="t" style="left:21.5px;top:680.9px;font-size:24px;line-height:24px;color:#a3a3a3;">1</div>
<div class="t" style="left:50.8px;top:680.9px;font-size:24px;line-height:24px;color:#f2f2f2;">CP</div>
<svg style="position:absolute;left:235px;top:681.0px" width="15" height="21" viewBox="0 0 15 21"><polygon points="0,6.5 5,6.5 14,0 14,21 5,14.5 0,14.5" fill="#8e8e8e"/></svg>
<div style="left:6px;top:746.2px;width:254px;height:1.6px;background:#555;"></div>
<div class="t" style="left:21.5px;top:718.9px;font-size:24px;line-height:24px;color:#a3a3a3;">1</div>
<div class="t" style="left:50.8px;top:718.9px;font-size:24px;line-height:24px;color:#f2f2f2;">MA</div>
<svg style="position:absolute;left:235px;top:719.0px" width="15" height="21" viewBox="0 0 15 21"><polygon points="0,6.5 5,6.5 14,0 14,21 5,14.5 0,14.5" fill="#8e8e8e"/></svg>
<div style="left:6px;top:784.2px;width:254px;height:1.6px;background:#555;"></div>
<div class="t" style="left:21.5px;top:756.9px;font-size:24px;line-height:24px;color:#a3a3a3;">1</div>
<div class="t" style="left:50.8px;top:756.9px;font-size:24px;line-height:24px;color:#f2f2f2;">OH Acc</div>
<svg style="position:absolute;left:235px;top:757.0px" width="15" height="21" viewBox="0 0 15 21"><polygon points="0,6.5 5,6.5 14,0 14,21 5,14.5 0,14.5" fill="#8e8e8e"/></svg>
<div style="left:6px;top:822.2px;width:254px;height:1.6px;background:#555;"></div>
<div class="t" style="left:21.5px;top:794.9px;font-size:24px;line-height:24px;color:#a3a3a3;">1</div>
<div class="t" style="left:50.8px;top:794.9px;font-size:24px;line-height:24px;color:#f2f2f2;">CH Acc</div>
<svg style="position:absolute;left:235px;top:795.0px" width="15" height="21" viewBox="0 0 15 21"><polygon points="0,6.5 5,6.5 14,0 14,21 5,14.5 0,14.5" fill="#8e8e8e"/></svg>
<div style="left:6px;top:860.2px;width:254px;height:1.6px;background:#555;"></div>
<div class="t" style="left:21.5px;top:832.9px;font-size:24px;line-height:24px;color:#a3a3a3;">1</div>
<div class="t" style="left:50.8px;top:832.9px;font-size:24px;line-height:24px;color:#f2f2f2;">SD Acc</div>
<svg style="position:absolute;left:235px;top:833.0px" width="15" height="21" viewBox="0 0 15 21"><polygon points="0,6.5 5,6.5 14,0 14,21 5,14.5 0,14.5" fill="#8e8e8e"/></svg>
<div style="left:6px;top:898.2px;width:254px;height:1.6px;background:#555;"></div>
<div class="t" style="left:21.5px;top:870.9px;font-size:24px;line-height:24px;color:#a3a3a3;">1</div>
<div class="t" style="left:50.8px;top:870.9px;font-size:24px;line-height:24px;color:#f2f2f2;">BD Acc</div>
<svg style="position:absolute;left:235px;top:871.0px" width="15" height="21" viewBox="0 0 15 21"><polygon points="0,6.5 5,6.5 14,0 14,21 5,14.5 0,14.5" fill="#8e8e8e"/></svg>
<div style="left:6px;top:936.2px;width:254px;height:1.6px;background:#555;"></div>
<div class="t" style="left:21.5px;top:908.9px;font-size:24px;line-height:24px;color:#a3a3a3;">1</div>
<div class="t" style="left:50.8px;top:908.9px;font-size:24px;line-height:24px;color:#f2f2f2;">OH</div>
<svg style="position:absolute;left:235px;top:909.0px" width="15" height="21" viewBox="0 0 15 21"><polygon points="0,6.5 5,6.5 14,0 14,21 5,14.5 0,14.5" fill="#8e8e8e"/></svg>
<div style="left:6px;top:974.2px;width:254px;height:1.6px;background:#555;"></div>
<div class="t" style="left:21.5px;top:946.9px;font-size:24px;line-height:24px;color:#a3a3a3;">1</div>
<div class="t" style="left:50.8px;top:946.9px;font-size:24px;line-height:24px;color:#f2f2f2;">CH</div>
<svg style="position:absolute;left:235px;top:947.0px" width="15" height="21" viewBox="0 0 15 21"><polygon points="0,6.5 5,6.5 14,0 14,21 5,14.5 0,14.5" fill="#8e8e8e"/></svg>
<div style="left:6px;top:1012.2px;width:254px;height:1.6px;background:#555;"></div>
<div class="t" style="left:21.5px;top:984.9px;font-size:24px;line-height:24px;color:#a3a3a3;">1</div>
<div class="t" style="left:50.8px;top:984.9px;font-size:24px;line-height:24px;color:#f2f2f2;">SD</div>
<svg style="position:absolute;left:235px;top:985.0px" width="15" height="21" viewBox="0 0 15 21"><polygon points="0,6.5 5,6.5 14,0 14,21 5,14.5 0,14.5" fill="#8e8e8e"/></svg>
<div style="left:6px;top:1050.2px;width:254px;height:1.6px;background:#555;"></div>
<div class="t" style="left:21.5px;top:1022.9px;font-size:24px;line-height:24px;color:#a3a3a3;">1</div>
<div class="t" style="left:50.8px;top:1022.9px;font-size:24px;line-height:24px;color:#f2f2f2;">BD</div>
<svg style="position:absolute;left:235px;top:1023.0px" width="15" height="21" viewBox="0 0 15 21"><polygon points="0,6.5 5,6.5 14,0 14,21 5,14.5 0,14.5" fill="#8e8e8e"/></svg>
<div style="left:0;top:0;width:260px;height:18px;background:linear-gradient(rgba(0,0,0,0.35),rgba(0,0,0,0));"></div>
</div>
<div style="left:338.0px;top:164.0px;width:2.0px;height:1157.0px;background:#262626;"></div>
<div style="left:340.0px;top:163.0px;width:3099.0px;height:109.5px;background:#333;"></div>
<svg style="position:absolute;left:340.0px;top:163.0px;" width="3099.0" height="110.0" viewBox="0 0 3099.0 110.0"><rect x="29.4" y="38.0" width="1.3" height="71.0" fill="#6a6a6a"/><rect x="107.1" y="38.0" width="1.3" height="71.0" fill="#6a6a6a"/><rect x="184.8" y="35.5" width="1.3" height="73.5" fill="#6a6a6a"/><rect x="262.5" y="38.0" width="1.3" height="71.0" fill="#6a6a6a"/><rect x="340.1" y="38.0" width="1.3" height="71.0" fill="#6a6a6a"/><rect x="417.8" y="38.0" width="1.3" height="71.0" fill="#6a6a6a"/><rect x="495.5" y="35.5" width="1.3" height="73.5" fill="#6a6a6a"/><rect x="573.2" y="38.0" width="1.3" height="71.0" fill="#6a6a6a"/><rect x="650.8" y="38.0" width="1.3" height="71.0" fill="#6a6a6a"/><rect x="728.5" y="38.0" width="1.3" height="71.0" fill="#6a6a6a"/><rect x="806.2" y="35.5" width="1.3" height="73.5" fill="#6a6a6a"/><rect x="883.9" y="38.0" width="1.3" height="71.0" fill="#6a6a6a"/><rect x="961.6" y="38.0" width="1.3" height="71.0" fill="#6a6a6a"/><rect x="1039.2" y="38.0" width="1.3" height="71.0" fill="#6a6a6a"/><rect x="1116.9" y="35.5" width="1.3" height="73.5" fill="#6a6a6a"/><rect x="1194.6" y="38.0" width="1.3" height="71.0" fill="#6a6a6a"/><rect x="1272.2" y="38.0" width="1.3" height="71.0" fill="#6a6a6a"/><rect x="1349.9" y="38.0" width="1.3" height="71.0" fill="#6a6a6a"/><rect x="1427.6" y="35.5" width="1.3" height="73.5" fill="#6a6a6a"/><rect x="1505.3" y="38.0" width="1.3" height="71.0" fill="#6a6a6a"/><rect x="1582.9" y="38.0" width="1.3" height="71.0" fill="#6a6a6a"/><rect x="1660.6" y="38.0" width="1.3" height="71.0" fill="#6a6a6a"/><rect x="1738.3" y="35.5" width="1.3" height="73.5" fill="#6a6a6a"/><rect x="1816.0" y="38.0" width="1.3" height="71.0" fill="#6a6a6a"/><rect x="1893.7" y="38.0" width="1.3" height="71.0" fill="#6a6a6a"/><rect x="1971.3" y="38.0" width="1.3" height="71.0" fill="#6a6a6a"/><rect x="2049.0" y="35.5" width="1.3" height="73.5" fill="#6a6a6a"/><rect x="2126.7" y="38.0" width="1.3" height="71.0" fill="#6a6a6a"/><rect x="2204.3" y="38.0" width="1.3" height="71.0" fill="#6a6a6a"/><rect x="2282.0" y="38.0" width="1.3" height="71.0" fill="#6a6a6a"/><rect x="2359.7" y="35.5" width="1.3" height="73.5" fill="#6a6a6a"/><rect x="2437.4" y="38.0" width="1.3" height="71.0" fill="#6a6a6a"/><rect x="2515.1" y="38.0" width="1.3" height="71.0" fill="#6a6a6a"/><rect x="2592.7" y="38.0" width="1.3" height="71.0" fill="#6a6a6a"/><rect x="2670.4" y="35.5" width="1.3" height="73.5" fill="#6a6a6a"/><rect x="2748.1" y="38.0" width="1.3" height="71.0" fill="#6a6a6a"/><rect x="2825.8" y="38.0" width="1.3" height="71.0" fill="#6a6a6a"/><rect x="2903.4" y="38.0" width="1.3" height="71.0" fill="#6a6a6a"/><rect x="2981.1" y="35.5" width="1.3" height="73.5" fill="#6a6a6a"/><rect x="3058.8" y="38.0" width="1.3" height="71.0" fill="#6a6a6a"/></svg>
<div style="left:340.0px;top:163.0px;width:40.0px;height:110.0px;background:linear-gradient(90deg,rgba(0,0,0,0.25),rgba(0,0,0,0));"></div>
<div class="t" style="left:529.9px;top:176.6px;font-size:25px;line-height:25px;color:#fafafa;transform:scaleX(0.93);transform-origin:left;">1.1</div>
<div class="t" style="left:840.6px;top:176.6px;font-size:25px;line-height:25px;color:#fafafa;transform:scaleX(0.93);transform-origin:left;">1.2</div>
<div class="t" style="left:1151.3px;top:176.6px;font-size:25px;line-height:25px;color:#fafafa;transform:scaleX(0.93);transform-origin:left;">1.3</div>
<div class="t" style="left:1462.0px;top:176.6px;font-size:25px;line-height:25px;color:#fafafa;transform:scaleX(0.93);transform-origin:left;">1.4</div>
<div class="t" style="left:1772.7px;top:176.6px;font-size:25px;line-height:25px;color:#fafafa;transform:scaleX(0.93);transform-origin:left;">2.1</div>
<div class="t" style="left:2083.4px;top:176.6px;font-size:25px;line-height:25px;color:#fafafa;transform:scaleX(0.93);transform-origin:left;">2.2</div>
<div class="t" style="left:2394.1px;top:176.6px;font-size:25px;line-height:25px;color:#fafafa;transform:scaleX(0.93);transform-origin:left;">2.3</div>
<div class="t" style="left:2704.8px;top:176.6px;font-size:25px;line-height:25px;color:#fafafa;transform:scaleX(0.93);transform-origin:left;">2.4</div>
<div class="t" style="left:3015.5px;top:176.6px;font-size:25px;line-height:25px;color:#fafafa;transform:scaleX(0.93);transform-origin:left;">3.1</div>
<div class="t" style="left:3326.2px;top:176.6px;font-size:25px;line-height:25px;color:#fafafa;transform:scaleX(0.93);transform-origin:left;">3.2</div>
<div style="left:524.8px;top:203.9px;width:2487.7px;height:33.3px;border:2px solid #e6a10e;background:#555;"></div>
<svg style="position:absolute;left:523.0px;top:236.0px;" width="34.0" height="36.0" viewBox="0 0 34.0 36.0"><path d="M2,1 L19,1 L31,17.5 L19,34 L2,34 Z" fill="#d89c10" stroke="#e6a10e" stroke-width="2.2"/><path d="M5,4 L18,4 L28,17.5 L18,31 L5,31 Z" fill="none" stroke="#4c4c4c" stroke-width="2"/><path d="M7,6 L17,6 L25,17.5 L17,29 L7,29 Z" fill="#d89c10"/></svg>
<svg style="position:absolute;left:2980.0px;top:236.0px;" width="34.0" height="36.0" viewBox="0 0 34.0 36.0"><path d="M31.5,1.5 L15,1.5 L3,17.5 L15,33.5 L31.5,33.5 Z" fill="#555" stroke="#737373" stroke-width="2"/></svg>
<div style="left:340px;top:272.5px;width:3099px;height:1048.5px;overflow:hidden;background:#999;">
<div style="left:185.4px;top:0;width:2486.1px;height:1048.5px;background:#a4a4a4;"></div>
<svg style="position:absolute;left:0;top:0" width="3099" height="1048.5"><rect x="29.5" y="0" width="1.1" height="1048.5" fill="#7c7c7c"/><rect x="107.2" y="0" width="1.1" height="1048.5" fill="#7c7c7c"/><rect x="184.8" y="0" width="1.1" height="1048.5" fill="#737373"/><rect x="262.5" y="0" width="1.1" height="1048.5" fill="#939393"/><rect x="340.2" y="0" width="1.1" height="1048.5" fill="#939393"/><rect x="417.9" y="0" width="1.1" height="1048.5" fill="#939393"/><rect x="495.5" y="0" width="1.1" height="1048.5" fill="#737373"/><rect x="573.2" y="0" width="1.1" height="1048.5" fill="#939393"/><rect x="650.9" y="0" width="1.1" height="1048.5" fill="#939393"/><rect x="728.6" y="0" width="1.1" height="1048.5" fill="#939393"/><rect x="806.2" y="0" width="1.1" height="1048.5" fill="#737373"/><rect x="883.9" y="0" width="1.1" height="1048.5" fill="#939393"/><rect x="961.6" y="0" width="1.1" height="1048.5" fill="#939393"/><rect x="1039.3" y="0" width="1.1" height="1048.5" fill="#939393"/><rect x="1117.0" y="0" width="1.1" height="1048.5" fill="#737373"/><rect x="1194.6" y="0" width="1.1" height="1048.5" fill="#939393"/><rect x="1272.3" y="0" width="1.1" height="1048.5" fill="#939393"/><rect x="1350.0" y="0" width="1.1" height="1048.5" fill="#939393"/><rect x="1427.6" y="0" width="1.1" height="1048.5" fill="#737373"/><rect x="1505.3" y="0" width="1.1" height="1048.5" fill="#939393"/><rect x="1583.0" y="0" width="1.1" height="1048.5" fill="#939393"/><rect x="1660.7" y="0" width="1.1" height="1048.5" fill="#939393"/><rect x="1738.4" y="0" width="1.1" height="1048.5" fill="#737373"/><rect x="1816.0" y="0" width="1.1" height="1048.5" fill="#939393"/><rect x="1893.7" y="0" width="1.1" height="1048.5" fill="#939393"/><rect x="1971.4" y="0" width="1.1" height="1048.5" fill="#939393"/><rect x="2049.0" y="0" width="1.1" height="1048.5" fill="#737373"/><rect x="2126.7" y="0" width="1.1" height="1048.5" fill="#939393"/><rect x="2204.4" y="0" width="1.1" height="1048.5" fill="#939393"/><rect x="2282.1" y="0" width="1.1" height="1048.5" fill="#939393"/><rect x="2359.8" y="0" width="1.1" height="1048.5" fill="#737373"/><rect x="2437.4" y="0" width="1.1" height="1048.5" fill="#939393"/><rect x="2515.1" y="0" width="1.1" height="1048.5" fill="#939393"/><rect x="2592.8" y="0" width="1.1" height="1048.5" fill="#939393"/><rect x="2670.4" y="0" width="1.1" height="1048.5" fill="#6a6a6a"/><rect x="2748.1" y="0" width="1.1" height="1048.5" fill="#7c7c7c"/><rect x="2825.8" y="0" width="1.1" height="1048.5" fill="#7c7c7c"/><rect x="2903.5" y="0" width="1.1" height="1048.5" fill="#7c7c7c"/><rect x="2981.1" y="0" width="1.1" height="1048.5" fill="#5e5e5e"/><rect x="3058.8" y="0" width="1.1" height="1048.5" fill="#7c7c7c"/><rect x="0" y="23.3" width="3099" height="1.2" fill="#7a7a7a"/><rect x="0" y="61.3" width="3099" height="1.2" fill="#7a7a7a"/><rect x="0" y="99.3" width="3099" height="1.2" fill="#7a7a7a"/><rect x="0" y="137.3" width="3099" height="1.2" fill="#7a7a7a"/><rect x="0" y="175.3" width="3099" height="1.2" fill="#7a7a7a"/><rect x="0" y="213.3" width="3099" height="1.2" fill="#7a7a7a"/><rect x="0" y="251.3" width="3099" height="1.2" fill="#7a7a7a"/><rect x="0" y="289.3" width="3099" height="1.2" fill="#7a7a7a"/><rect x="0" y="327.3" width="3099" height="1.2" fill="#7a7a7a"/><rect x="0" y="365.3" width="3099" height="1.2" fill="#7a7a7a"/><rect x="0" y="403.3" width="3099" height="1.2" fill="#7a7a7a"/><rect x="0" y="441.3" width="3099" height="1.2" fill="#7a7a7a"/><rect x="0" y="479.3" width="3099" height="1.2" fill="#7a7a7a"/><rect x="0" y="517.3" width="3099" height="1.2" fill="#7a7a7a"/><rect x="0" y="555.3" width="3099" height="1.2" fill="#7a7a7a"/><rect x="0" y="593.3" width="3099" height="1.2" fill="#7a7a7a"/><rect x="0" y="631.3" width="3099" height="1.2" fill="#7a7a7a"/><rect x="0" y="669.3" width="3099" height="1.2" fill="#7a7a7a"/><rect x="0" y="707.3" width="3099" height="1.2" fill="#7a7a7a"/><rect x="0" y="745.3" width="3099" height="1.2" fill="#7a7a7a"/><rect x="0" y="783.3" width="3099" height="1.2" fill="#7a7a7a"/><rect x="0" y="821.3" width="3099" height="1.2" fill="#7a7a7a"/><rect x="0" y="859.3" width="3099" height="1.2" fill="#7a7a7a"/><rect x="0" y="897.3" width="3099" height="1.2" fill="#7a7a7a"/><rect x="0" y="935.3" width="3099" height="1.2" fill="#7a7a7a"/><rect x="0" y="973.3" width="3099" height="1.2" fill="#7a7a7a"/><rect x="0" y="1011.3" width="3099" height="1.2" fill="#7a7a7a"/><rect x="0" y="1049.3" width="3099" height="1.2" fill="#7a7a7a"/></svg>
<div style="left:184.6px;top:0;width:1.8px;height:1048.5px;background:#e6e6e6;"></div>
<div style="left:0;top:0;width:32px;height:1048.5px;background:linear-gradient(90deg,rgba(0,0,0,0.33),rgba(0,0,0,0));"></div>
<div style="left:3054px;top:0;width:45px;height:1048.5px;background:linear-gradient(90deg,rgba(0,0,0,0),rgba(0,0,0,0.25));"></div>
<div style="left:262.6px;top:24.7px;width:78.7px;height:36.6px;background:#dcae42;border:2.2px solid #3d3011;"></div>
<div class="t" style="left:271.3px;top:31.2px;font-size:24px;line-height:24px;color:#4b3f1c;">D3</div>
<div style="left:884.0px;top:24.7px;width:78.7px;height:36.6px;background:#dcae42;border:2.2px solid #3d3011;"></div>
<div class="t" style="left:892.7px;top:31.2px;font-size:24px;line-height:24px;color:#4b3f1c;">D3</div>
<div style="left:1505.4px;top:24.7px;width:78.7px;height:36.6px;background:#dcae42;border:2.2px solid #3d3011;"></div>
<div class="t" style="left:1514.1px;top:31.2px;font-size:24px;line-height:24px;color:#4b3f1c;">D3</div>
<div style="left:2126.8px;top:24.7px;width:78.7px;height:36.6px;background:#dcae42;border:2.2px solid #3d3011;"></div>
<div class="t" style="left:2135.5px;top:31.2px;font-size:24px;line-height:24px;color:#4b3f1c;">D3</div>
<div style="left:495.6px;top:252.7px;width:78.7px;height:36.6px;background:#dcae42;border:2.2px solid #3d3011;"></div>
<div class="t" style="left:504.3px;top:259.2px;font-size:24px;line-height:24px;color:#4b3f1c;">G#2</div>
<div style="left:1117.0px;top:252.7px;width:78.7px;height:36.6px;background:#dcae42;border:2.2px solid #3d3011;"></div>
<div class="t" style="left:1125.7px;top:259.2px;font-size:24px;line-height:24px;color:#4b3f1c;">G#2</div>
<div style="left:1738.4px;top:252.7px;width:78.7px;height:36.6px;background:#dcae42;border:2.2px solid #3d3011;"></div>
<div class="t" style="left:1747.1px;top:259.2px;font-size:24px;line-height:24px;color:#4b3f1c;">G#2</div>
<div style="left:1039.3px;top:328.7px;width:78.7px;height:36.6px;background:#dcae42;border:2.2px solid #3d3011;"></div>
<div class="t" style="left:1048.0px;top:335.2px;font-size:24px;line-height:24px;color:#4b3f1c;">F#2</div>
<div style="left:262.6px;top:366.7px;width:78.7px;height:36.6px;background:#dcae42;border:2.2px solid #3d3011;"></div>
<div class="t" style="left:271.3px;top:373.2px;font-size:24px;line-height:24px;color:#4b3f1c;">F2</div>
<div style="left:1583.0px;top:366.7px;width:78.7px;height:36.6px;background:#dcae42;border:2.2px solid #3d3011;"></div>
<div class="t" style="left:1591.7px;top:373.2px;font-size:24px;line-height:24px;color:#4b3f1c;">F2</div>
<div style="left:262.6px;top:404.7px;width:78.7px;height:36.6px;background:#dcae42;border:2.2px solid #3d3011;"></div>
<div class="t" style="left:271.3px;top:411.2px;font-size:24px;line-height:24px;color:#4b3f1c;">E2</div>
<div style="left:884.0px;top:404.7px;width:78.7px;height:36.6px;background:#dcae42;border:2.2px solid #3d3011;"></div>
<div class="t" style="left:892.7px;top:411.2px;font-size:24px;line-height:24px;color:#4b3f1c;">E2</div>
<div style="left:1505.4px;top:404.7px;width:78.7px;height:36.6px;background:#dcae42;border:2.2px solid #3d3011;"></div>
<div class="t" style="left:1514.1px;top:411.2px;font-size:24px;line-height:24px;color:#4b3f1c;">E2</div>
<div style="left:2126.8px;top:404.7px;width:78.7px;height:36.6px;background:#dcae42;border:2.2px solid #3d3011;"></div>
<div class="t" style="left:2135.5px;top:411.2px;font-size:24px;line-height:24px;color:#4b3f1c;">E2</div>
<div style="left:417.9px;top:708.7px;width:78.7px;height:36.6px;background:#dcae42;border:2.2px solid #3d3011;"></div>
<div class="t" style="left:426.6px;top:715.2px;font-size:24px;line-height:24px;color:#4b3f1c;">G#1</div>
<div style="left:650.9px;top:708.7px;width:78.7px;height:36.6px;background:#dcae42;border:2.2px solid #3d3011;"></div>
<div class="t" style="left:659.6px;top:715.2px;font-size:24px;line-height:24px;color:#4b3f1c;">G#1</div>
<div style="left:1039.3px;top:708.7px;width:78.7px;height:36.6px;background:#dcae42;border:2.2px solid #3d3011;"></div>
<div class="t" style="left:1048.0px;top:715.2px;font-size:24px;line-height:24px;color:#4b3f1c;">G#1</div>
<div style="left:1272.3px;top:708.7px;width:78.7px;height:36.6px;background:#dcae42;border:2.2px solid #3d3011;"></div>
<div class="t" style="left:1281.0px;top:715.2px;font-size:24px;line-height:24px;color:#4b3f1c;">G#1</div>
<div style="left:1660.7px;top:708.7px;width:78.7px;height:36.6px;background:#dcae42;border:2.2px solid #3d3011;"></div>
<div class="t" style="left:1669.4px;top:715.2px;font-size:24px;line-height:24px;color:#4b3f1c;">G#1</div>
<div style="left:1893.8px;top:708.7px;width:78.7px;height:36.6px;background:#dcae42;border:2.2px solid #3d3011;"></div>
<div class="t" style="left:1902.5px;top:715.2px;font-size:24px;line-height:24px;color:#4b3f1c;">G#1</div>
<div style="left:1971.4px;top:746.7px;width:78.7px;height:36.6px;background:#dcae42;border:2.2px solid #3d3011;"></div>
<div class="t" style="left:1980.1px;top:753.2px;font-size:24px;line-height:24px;color:#4b3f1c;">G1</div>
<div style="left:2049.1px;top:746.7px;width:78.7px;height:36.6px;background:#dcae42;border:2.2px solid #3d3011;"></div>
<div class="t" style="left:2057.8px;top:753.2px;font-size:24px;line-height:24px;color:#4b3f1c;">G1</div>
<div style="left:2204.4px;top:746.7px;width:78.7px;height:36.6px;background:#dcae42;border:2.2px solid #3d3011;"></div>
<div class="t" style="left:2213.1px;top:753.2px;font-size:24px;line-height:24px;color:#4b3f1c;">G1</div>
<div style="left:2359.8px;top:746.7px;width:78.7px;height:36.6px;background:#dcae42;border:2.2px solid #3d3011;"></div>
<div class="t" style="left:2368.5px;top:753.2px;font-size:24px;line-height:24px;color:#4b3f1c;">G1</div>
<div style="left:2515.2px;top:746.7px;width:78.7px;height:36.6px;background:#dcae42;border:2.2px solid #3d3011;"></div>
<div class="t" style="left:2523.8px;top:753.2px;font-size:24px;line-height:24px;color:#4b3f1c;">G1</div>
<div style="left:650.9px;top:860.7px;width:78.7px;height:36.6px;background:#dcae42;border:2.2px solid #3d3011;"></div>
<div class="t" style="left:659.6px;top:867.2px;font-size:24px;line-height:24px;color:#4b3f1c;">E1</div>
<div style="left:1893.8px;top:860.7px;width:78.7px;height:36.6px;background:#dcae42;border:2.2px solid #3d3011;"></div>
<div class="t" style="left:1902.5px;top:867.2px;font-size:24px;line-height:24px;color:#4b3f1c;">E1</div>
<div style="left:262.6px;top:898.7px;width:78.7px;height:36.6px;background:#dcae42;border:2.2px solid #3d3011;"></div>
<div class="t" style="left:271.3px;top:905.2px;font-size:24px;line-height:24px;color:#4b3f1c;">D#1</div>
<div style="left:495.6px;top:898.7px;width:78.7px;height:36.6px;background:#dcae42;border:2.2px solid #3d3011;"></div>
<div class="t" style="left:504.3px;top:905.2px;font-size:24px;line-height:24px;color:#4b3f1c;">D#1</div>
<div style="left:728.6px;top:898.7px;width:78.7px;height:36.6px;background:#dcae42;border:2.2px solid #3d3011;"></div>
<div class="t" style="left:737.3px;top:905.2px;font-size:24px;line-height:24px;color:#4b3f1c;">D#1</div>
<div style="left:1117.0px;top:898.7px;width:78.7px;height:36.6px;background:#dcae42;border:2.2px solid #3d3011;"></div>
<div class="t" style="left:1125.7px;top:905.2px;font-size:24px;line-height:24px;color:#4b3f1c;">D#1</div>
<div style="left:1350.0px;top:898.7px;width:78.7px;height:36.6px;background:#dcae42;border:2.2px solid #3d3011;"></div>
<div class="t" style="left:1358.7px;top:905.2px;font-size:24px;line-height:24px;color:#4b3f1c;">D#1</div>
<div style="left:1505.4px;top:898.7px;width:78.7px;height:36.6px;background:#dcae42;border:2.2px solid #3d3011;"></div>
<div class="t" style="left:1514.1px;top:905.2px;font-size:24px;line-height:24px;color:#4b3f1c;">D#1</div>
<div style="left:1738.4px;top:898.7px;width:78.7px;height:36.6px;background:#dcae42;border:2.2px solid #3d3011;"></div>
<div class="t" style="left:1747.1px;top:905.2px;font-size:24px;line-height:24px;color:#4b3f1c;">D#1</div>
<div style="left:2126.8px;top:898.7px;width:78.7px;height:36.6px;background:#dcae42;border:2.2px solid #3d3011;"></div>
<div class="t" style="left:2135.5px;top:905.2px;font-size:24px;line-height:24px;color:#4b3f1c;">D#1</div>
<div style="left:2282.1px;top:898.7px;width:78.7px;height:36.6px;background:#dcae42;border:2.2px solid #3d3011;"></div>
<div class="t" style="left:2290.8px;top:905.2px;font-size:24px;line-height:24px;color:#4b3f1c;">D#1</div>
<div style="left:2437.5px;top:898.7px;width:78.7px;height:36.6px;background:#dcae42;border:2.2px solid #3d3011;"></div>
<div class="t" style="left:2446.2px;top:905.2px;font-size:24px;line-height:24px;color:#4b3f1c;">D#1</div>
<div style="left:2592.8px;top:898.7px;width:78.7px;height:36.6px;background:#dcae42;border:2.2px solid #3d3011;"></div>
<div class="t" style="left:2601.5px;top:905.2px;font-size:24px;line-height:24px;color:#4b3f1c;">D#1</div>
<div style="left:184.9px;top:936.7px;width:78.7px;height:36.6px;background:#dcae42;border:2.2px solid #3d3011;"></div>
<div class="t" style="left:193.6px;top:943.2px;font-size:24px;line-height:24px;color:#4b3f1c;">D1</div>
<div style="left:340.2px;top:936.7px;width:78.7px;height:36.6px;background:#dcae42;border:2.2px solid #3d3011;"></div>
<div class="t" style="left:348.9px;top:943.2px;font-size:24px;line-height:24px;color:#4b3f1c;">D1</div>
<div style="left:417.9px;top:936.7px;width:78.7px;height:36.6px;background:#dcae42;border:2.2px solid #3d3011;"></div>
<div class="t" style="left:426.6px;top:943.2px;font-size:24px;line-height:24px;color:#4b3f1c;">D1</div>
<div style="left:650.9px;top:936.7px;width:78.7px;height:36.6px;background:#dcae42;border:2.2px solid #3d3011;"></div>
<div class="t" style="left:659.6px;top:943.2px;font-size:24px;line-height:24px;color:#4b3f1c;">D1</div>
<div style="left:884.0px;top:936.7px;width:78.7px;height:36.6px;background:#dcae42;border:2.2px solid #3d3011;"></div>
<div class="t" style="left:892.7px;top:943.2px;font-size:24px;line-height:24px;color:#4b3f1c;">D1</div>
<div style="left:1039.3px;top:936.7px;width:78.7px;height:36.6px;background:#dcae42;border:2.2px solid #3d3011;"></div>
<div class="t" style="left:1048.0px;top:943.2px;font-size:24px;line-height:24px;color:#4b3f1c;">D1</div>
<div style="left:1272.3px;top:936.7px;width:78.7px;height:36.6px;background:#dcae42;border:2.2px solid #3d3011;"></div>
<div class="t" style="left:1281.0px;top:943.2px;font-size:24px;line-height:24px;color:#4b3f1c;">D1</div>
<div style="left:1427.7px;top:936.7px;width:78.7px;height:36.6px;background:#dcae42;border:2.2px solid #3d3011;"></div>
<div class="t" style="left:1436.4px;top:943.2px;font-size:24px;line-height:24px;color:#4b3f1c;">D1</div>
<div style="left:1583.0px;top:936.7px;width:78.7px;height:36.6px;background:#dcae42;border:2.2px solid #3d3011;"></div>
<div class="t" style="left:1591.7px;top:943.2px;font-size:24px;line-height:24px;color:#4b3f1c;">D1</div>
<div style="left:1660.7px;top:936.7px;width:78.7px;height:36.6px;background:#dcae42;border:2.2px solid #3d3011;"></div>
<div class="t" style="left:1669.4px;top:943.2px;font-size:24px;line-height:24px;color:#4b3f1c;">D1</div>
<div style="left:1893.8px;top:936.7px;width:78.7px;height:36.6px;background:#dcae42;border:2.2px solid #3d3011;"></div>
<div class="t" style="left:1902.5px;top:943.2px;font-size:24px;line-height:24px;color:#4b3f1c;">D1</div>
<div style="left:495.6px;top:974.7px;width:78.7px;height:36.6px;background:#dcae42;border:2.2px solid #3d3011;"></div>
<div class="t" style="left:504.3px;top:981.2px;font-size:24px;line-height:24px;color:#4b3f1c;">C#1</div>
<div style="left:1117.0px;top:974.7px;width:78.7px;height:36.6px;background:#dcae42;border:2.2px solid #3d3011;"></div>
<div class="t" style="left:1125.7px;top:981.2px;font-size:24px;line-height:24px;color:#4b3f1c;">C#1</div>
<div style="left:1738.4px;top:974.7px;width:78.7px;height:36.6px;background:#dcae42;border:2.2px solid #3d3011;"></div>
<div class="t" style="left:1747.1px;top:981.2px;font-size:24px;line-height:24px;color:#4b3f1c;">C#1</div>
<div style="left:2359.8px;top:974.7px;width:78.7px;height:36.6px;background:#dcae42;border:2.2px solid #3d3011;"></div>
<div class="t" style="left:2368.5px;top:981.2px;font-size:24px;line-height:24px;color:#4b3f1c;">C#1</div>
<div style="left:184.9px;top:1012.7px;width:78.7px;height:36.6px;background:#dcae42;border:2.2px solid #3d3011;"></div>
<div class="t" style="left:193.6px;top:1019.2px;font-size:24px;line-height:24px;color:#4b3f1c;">C1</div>
<div style="left:417.9px;top:1012.7px;width:78.7px;height:36.6px;background:#dcae42;border:2.2px solid #3d3011;"></div>
<div class="t" style="left:426.6px;top:1019.2px;font-size:24px;line-height:24px;color:#4b3f1c;">C1</div>
<div style="left:884.0px;top:1012.7px;width:78.7px;height:36.6px;background:#dcae42;border:2.2px solid #3d3011;"></div>
<div class="t" style="left:892.7px;top:1019.2px;font-size:24px;line-height:24px;color:#4b3f1c;">C1</div>
<div style="left:1427.7px;top:1012.7px;width:78.7px;height:36.6px;background:#dcae42;border:2.2px solid #3d3011;"></div>
<div class="t" style="left:1436.4px;top:1019.2px;font-size:24px;line-height:24px;color:#4b3f1c;">C1</div>
<div style="left:1660.7px;top:1012.7px;width:78.7px;height:36.6px;background:#dcae42;border:2.2px solid #3d3011;"></div>
<div class="t" style="left:1669.4px;top:1019.2px;font-size:24px;line-height:24px;color:#4b3f1c;">C1</div>
<div style="left:2126.8px;top:1012.7px;width:78.7px;height:36.6px;background:#dcae42;border:2.2px solid #3d3011;"></div>
<div class="t" style="left:2135.5px;top:1019.2px;font-size:24px;line-height:24px;color:#4b3f1c;">C1</div>
</div>
<div style="left:340.0px;top:272.5px;width:3099.0px;height:1.5px;background:rgba(0,0,0,0.35);"></div>
<div style="left:1231.6px;top:164.0px;width:2.0px;height:1157.0px;background:#141414;"></div>
<div style="left:205.6px;top:1329.0px;width:38.0px;height:37.7px;border-radius:7px;background:#353535;"></div>
<svg style="position:absolute;left:215.0px;top:1338.0px;" width="18.0" height="21.0" viewBox="0 0 18.0 21.0"><polygon points="1,6.5 6,6.5 16,0.5 16,20.5 6,14 1,14" fill="#f98b1b"/></svg>
<svg style="position:absolute;left:254.0px;top:1337.0px;" width="30.0" height="25.0" viewBox="0 0 30.0 25.0"><g fill="#c8c8c8"><rect x="3.5" y="4" width="2.4" height="21"/><rect x="12.5" y="0" width="2.4" height="25"/><rect x="21.5" y="4" width="2.4" height="21"/></g><g fill="none" stroke="#c8c8c8" stroke-width="2.2"><rect x="1" y="6" width="7" height="6"/><rect x="10" y="2" width="7" height="6"/><rect x="19" y="6" width="7" height="6"/></g></svg>
<svg style="position:absolute;left:300.0px;top:1335.0px;" width="28.0" height="26.0" viewBox="0 0 28.0 26.0"><circle cx="7" cy="19" r="5" fill="none" stroke="#c8c8c8" stroke-width="3"/><circle cx="20" cy="7" r="5" fill="none" stroke="#c8c8c8" stroke-width="3"/><line x1="10.5" y1="15.5" x2="16.5" y2="10.5" stroke="#c8c8c8" stroke-width="3"/></svg>
<svg style="position:absolute;left:348.0px;top:1338.0px;" width="17.0" height="20.0" viewBox="0 0 17.0 20.0"><polygon points="16,0 16,19 0.5,9.5" fill="#9a9a9a"/></svg>
<div style="left:379.0px;top:1333.3px;width:2724.6px;height:29.4px;border-radius:11px;background:linear-gradient(#8c8c8c,#6a6a6a);"></div>
<svg style="position:absolute;left:3118.0px;top:1338.0px;" width="17.0" height="20.0" viewBox="0 0 17.0 20.0"><polygon points="0.5,0 0.5,19 16,9.5" fill="#9a9a9a"/></svg>
<div class="t" style="left:3263.0px;top:1336.8px;font-size:25px;line-height:25px;color:#f0f0f0;transform:scaleX(0.95);transform-origin:left;">1/16</div>
<svg style="position:absolute;left:3327.0px;top:1344.0px;" width="13.0" height="9.0" viewBox="0 0 13.0 9.0"><polygon points="0,8.5 12.5,8.5 6.25,0.5" fill="#c8c8c8"/></svg>
<div style="left:3353.0px;top:1328.8px;width:37.6px;height:38.0px;border-radius:7px;background:#353535;"></div>
<svg style="position:absolute;left:3358.0px;top:1335.0px;" width="28.0" height="26.0" viewBox="0 0 28.0 26.0"><polygon points="1,6 1,20 9,13" fill="#f98b1b"/><polygon points="27,6 27,20 19,13" fill="#f98b1b"/><rect x="13" y="1" width="2.2" height="25" fill="#f98b1b"/></svg>
<svg style="position:absolute;left:3406.0px;top:1335.0px;" width="24.0" height="28.0" viewBox="0 0 24.0 28.0"><rect x="0" y="5" width="18" height="3" fill="#d0d0d0"/><polygon points="15,0 23,6.5 15,13" fill="#d0d0d0"/><rect x="2" y="15" width="2" height="12" fill="#5a5a5a"/><rect x="8" y="15" width="2" height="12" fill="#8a8a8a"/><rect x="14" y="15" width="2" height="12" fill="#d0d0d0"/></svg>
<div style="left:9.0px;top:1383.3px;width:3436.0px;height:553.0px;border-radius:10px;background:#555;"></div>
<div style="left:13.0px;top:1387.3px;width:3428.0px;height:545.0px;border-radius:7px;background:#0c0c0c;"></div>
<div style="left:13.0px;top:1387.3px;width:59.0px;height:545.5px;background:#3e3e3e;border-radius:7px 0 0 7px;"></div>
<div style="left:13.0px;top:1405.0px;width:59.0px;height:9.0px;background:#8a8a8a;"></div>
<div style="left:13.0px;top:1906.0px;width:59.0px;height:9.0px;background:#8a8a8a;"></div>
<div style="left:76.0px;top:1387.3px;width:59.0px;height:545.5px;background:#3e3e3e;"></div>
<div style="left:76.0px;top:1405.0px;width:59.0px;height:9.0px;background:#dba013;"></div>
<div style="left:76.0px;top:1906.0px;width:59.0px;height:9.0px;background:#dba013;"></div>
<div style="left:43px;top:1660px;width:0;height:0;"><div class="t" style="left:-300px;top:-14.5px;width:600px;text-align:center;font-size:25px;line-height:29.0px;color:#ececec;transform:rotate(-90deg) scaleX(0.87);transform-origin:300px 14.5px;">PROJECT</div></div>
<div style="left:106px;top:1659px;width:0;height:0;"><div class="t" style="left:-300px;top:-14.5px;width:600px;text-align:center;font-size:25px;line-height:29.0px;color:#ececec;transform:rotate(-90deg) scaleX(0.935);transform-origin:300px 14.5px;">DRUM MACHINE</div></div>
<svg style="position:absolute;left:28.0px;top:1434.0px;" width="30.0" height="24.0" viewBox="0 0 30.0 24.0"><polygon points="1,5 8,12 15,1 22,12 29,5 26,18 4,18" fill="#b8b8b8"/><rect x="4" y="20" width="22" height="3" fill="#b8b8b8"/></svg>
<svg style="position:absolute;left:92.0px;top:1432.0px;" width="28.0" height="28.0" viewBox="0 0 28.0 28.0"><rect x="1" y="1" width="26" height="26" fill="#b8b8b8"/><rect x="7" y="1" width="3" height="15" fill="#3e3e3e"/><rect x="16" y="1" width="3" height="15" fill="#3e3e3e"/><rect x="9" y="16" width="1" height="11" fill="#3e3e3e"/><rect x="18" y="16" width="1" height="11" fill="#3e3e3e"/></svg>
<svg style="position:absolute;left:31.2px;top:1827.0px;" width="22.0" height="22.0" viewBox="0 0 22.0 22.0"><circle cx="11" cy="11" r="10" fill="#c8c8c8"/><rect x="9.8" y="1" width="2.4" height="7" fill="#3e3e3e"/></svg>
<svg style="position:absolute;left:28.2px;top:1874.0px;" width="30.0" height="14.0" viewBox="0 0 30.0 14.0"><circle cx="6" cy="7" r="4.3" fill="none" stroke="#c0c0c0" stroke-width="2.4"/><rect x="10" y="6" width="15" height="2.4" fill="#c0c0c0"/><polygon points="20,1.5 28,7.2 20,13" fill="#c0c0c0"/></svg>
<svg style="position:absolute;left:94.5px;top:1827.0px;" width="22.0" height="22.0" viewBox="0 0 22.0 22.0"><circle cx="11" cy="11" r="10" fill="#c8c8c8"/><rect x="9.8" y="1" width="2.4" height="7" fill="#3e3e3e"/></svg>
<svg style="position:absolute;left:91.5px;top:1874.0px;" width="30.0" height="14.0" viewBox="0 0 30.0 14.0"><circle cx="6" cy="7" r="4.3" fill="none" stroke="#c0c0c0" stroke-width="2.4"/><rect x="10" y="6" width="15" height="2.4" fill="#c0c0c0"/><polygon points="20,1.5 28,7.2 20,13" fill="#c0c0c0"/></svg>
<div style="left:154.8px;top:1431.0px;width:20.4px;height:20.2px;background:#f4d443;"></div>
<svg style="position:absolute;left:154.0px;top:1650.0px;" width="22.0" height="22.0" viewBox="0 0 22.0 22.0"><path d="M11,1 L11,21 M1,11 L21,11" stroke="#8a8a8a" stroke-width="4.2"/></svg>
<div style="left:188.0px;top:1414.0px;width:2871.5px;height:491.5px;border-radius:13px;background:#555;"></div>
<div style="left:188.0px;top:1414.0px;width:59.0px;height:491.5px;border-radius:13px 0 0 13px;background:#3d3d3d;"></div>
<svg style="position:absolute;left:205.0px;top:1430.0px;" width="24.0" height="25.0" viewBox="0 0 24.0 25.0"><path d="M6.5,6 A9.5,9.5 0 1 0 17.5,6" fill="none" stroke="#f98b1b" stroke-width="3.2" stroke-linecap="round"/><line x1="12" y1="2" x2="12" y2="12" stroke="#f98b1b" stroke-width="3.2" stroke-linecap="round"/></svg>
<svg style="position:absolute;left:204.0px;top:1477.0px;" width="30.0" height="25.0" viewBox="0 0 30.0 25.0"><path d="M1,3 Q1,1 3,1 L10,1 L13,4 L27,4 Q29,4 29,6 L29,8 L1,8Z" fill="#8c8c8c"/><path d="M3,9 L29,9 L27,23 Q27,24 26,24 L2,24 Q1,24 1,23 Z" fill="#8c8c8c"/></svg>
<div style="left:217px;top:1659px;width:0;height:0;"><div class="t" style="left:-300px;top:-14.5px;width:600px;text-align:center;font-size:25px;line-height:29.0px;color:#ececec;transform:rotate(-90deg) scaleX(0.935);transform-origin:300px 14.5px;">DRUM MACHINE</div></div>
<svg style="position:absolute;left:208.0px;top:1787.0px;" width="22.0" height="22.0" viewBox="0 0 22.0 22.0"><path d="M2,3 L13,3 L13,17" fill="none" stroke="#8c8c8c" stroke-width="2.6"/><polygon points="6,12 20,12 13,21" fill="#8c8c8c"/></svg>
<svg style="position:absolute;left:206.5px;top:1827.0px;" width="22.0" height="22.0" viewBox="0 0 22.0 22.0"><circle cx="11" cy="11" r="10" fill="#c8c8c8"/><rect x="9.8" y="1" width="2.4" height="7" fill="#3d3d3d"/></svg>
<svg style="position:absolute;left:203.0px;top:1874.0px;" width="30.0" height="14.0" viewBox="0 0 30.0 14.0"><circle cx="6" cy="7" r="5.5" fill="#f98b1b"/><rect x="10" y="5.8" width="15" height="2.6" fill="#f98b1b"/><polygon points="20,1.5 28,7.2 20,13" fill="#f98b1b"/></svg>
<div style="left:253.2px;top:1420.0px;width:152.7px;height:153.5px;border-radius:8px;background:#2c2c2c;"></div>
<div class="t" style="left:229.7px;top:1427.8px;width:200px;text-align:center;font-size:25px;line-height:25px;color:#f2f2f2;transform:scaleX(0.94);">Acc Vol.</div>
<svg style="position:absolute;left:280.2px;top:1447.3px;" width="100.0" height="100.0" viewBox="0 0 100.0 100.0"><defs><linearGradient id="kg1" x1="0" y1="0" x2="0" y2="1"><stop offset="0" stop-color="#7e7e7e"/><stop offset="1" stop-color="#474747"/></linearGradient></defs><path d="M25.57,79.11 A38,38 0 1 1 74.43,79.11" fill="none" stroke="#474747" stroke-width="5"/><path d="M25.57,79.11 A38,38 0 1 1 87.79,46.03" fill="none" stroke="#f98b1b" stroke-width="5"/><circle cx="50" cy="50" r="29.2" fill="#242424"/><circle cx="50" cy="50" r="27" fill="url(#kg1)"/><line x1="56.96" y1="49.27" x2="76.35" y2="47.23" stroke="#ededed" stroke-width="5.2"/></svg>
<svg style="position:absolute;left:381.2px;top:1482.5px;" width="18.0" height="24.0" viewBox="0 0 18.0 24.0"><path d="M8.5,1 L8.5,14 M2,7.5 L15,7.5" stroke="#9a9a9a" stroke-width="2.6"/><rect x="0.5" y="18.5" width="16" height="2.8" fill="#9a9a9a"/></svg>
<svg style="position:absolute;left:310.2px;top:1547.0px;" width="44.0" height="18.0" viewBox="0 0 44.0 18.0"><circle cx="9" cy="9" r="7.9" fill="#d6f5fd"/><rect x="9" y="7.6" width="24" height="2.8" fill="#d6f5fd"/><polygon points="30,0.5 40.5,9 30,17.5" fill="#d6f5fd"/></svg>
<div style="left:412.2px;top:1420.0px;width:152.7px;height:153.5px;border-radius:8px;background:#2c2c2c;"></div>
<div class="t" style="left:388.7px;top:1427.8px;width:200px;text-align:center;font-size:25px;line-height:25px;color:#f2f2f2;transform:scaleX(0.94);">BD Level</div>
<svg style="position:absolute;left:439.2px;top:1447.3px;" width="100.0" height="100.0" viewBox="0 0 100.0 100.0"><defs><linearGradient id="kg2" x1="0" y1="0" x2="0" y2="1"><stop offset="0" stop-color="#7e7e7e"/><stop offset="1" stop-color="#474747"/></linearGradient></defs><path d="M25.57,79.11 A38,38 0 1 1 74.43,79.11" fill="none" stroke="#474747" stroke-width="5"/><path d="M25.57,79.11 A38,38 0 1 1 87.17,57.90" fill="none" stroke="#f98b1b" stroke-width="5"/><circle cx="50" cy="50" r="29.2" fill="#242424"/><circle cx="50" cy="50" r="27" fill="url(#kg2)"/><line x1="56.85" y1="51.46" x2="75.92" y2="55.51" stroke="#ededed" stroke-width="5.2"/></svg>
<svg style="position:absolute;left:540.2px;top:1482.5px;" width="18.0" height="24.0" viewBox="0 0 18.0 24.0"><path d="M8.5,1 L8.5,14 M2,7.5 L15,7.5" stroke="#9a9a9a" stroke-width="2.6"/><rect x="0.5" y="18.5" width="16" height="2.8" fill="#9a9a9a"/></svg>
<svg style="position:absolute;left:469.2px;top:1547.0px;" width="44.0" height="18.0" viewBox="0 0 44.0 18.0"><circle cx="9" cy="9" r="7.9" fill="#d6f5fd"/><rect x="9" y="7.6" width="24" height="2.8" fill="#d6f5fd"/><polygon points="30,0.5 40.5,9 30,17.5" fill="#d6f5fd"/></svg>
<div style="left:571.2px;top:1420.0px;width:152.7px;height:153.5px;border-radius:8px;background:#2c2c2c;"></div>
<div class="t" style="left:547.7px;top:1427.8px;width:200px;text-align:center;font-size:25px;line-height:25px;color:#f2f2f2;transform:scaleX(0.94);">SD Level</div>
<svg style="position:absolute;left:598.2px;top:1447.3px;" width="100.0" height="100.0" viewBox="0 0 100.0 100.0"><defs><linearGradient id="kg3" x1="0" y1="0" x2="0" y2="1"><stop offset="0" stop-color="#7e7e7e"/><stop offset="1" stop-color="#474747"/></linearGradient></defs><path d="M25.57,79.11 A38,38 0 1 1 74.43,79.11" fill="none" stroke="#474747" stroke-width="5"/><path d="M25.57,79.11 A38,38 0 1 1 84.44,66.06" fill="none" stroke="#f98b1b" stroke-width="5"/><circle cx="50" cy="50" r="29.2" fill="#242424"/><circle cx="50" cy="50" r="27" fill="url(#kg3)"/><line x1="56.34" y1="52.96" x2="74.02" y2="61.20" stroke="#ededed" stroke-width="5.2"/></svg>
<svg style="position:absolute;left:699.2px;top:1482.5px;" width="18.0" height="24.0" viewBox="0 0 18.0 24.0"><path d="M8.5,1 L8.5,14 M2,7.5 L15,7.5" stroke="#9a9a9a" stroke-width="2.6"/><rect x="0.5" y="18.5" width="16" height="2.8" fill="#9a9a9a"/></svg>
<svg style="position:absolute;left:628.2px;top:1547.0px;" width="44.0" height="18.0" viewBox="0 0 44.0 18.0"><circle cx="9" cy="9" r="7.9" fill="#d6f5fd"/><rect x="9" y="7.6" width="24" height="2.8" fill="#d6f5fd"/><polygon points="30,0.5 40.5,9 30,17.5" fill="#d6f5fd"/></svg>
<div style="left:730.2px;top:1420.0px;width:152.7px;height:153.5px;border-radius:8px;background:#2c2c2c;"></div>
<div class="t" style="left:706.7px;top:1427.8px;width:200px;text-align:center;font-size:25px;line-height:25px;color:#f2f2f2;transform:scaleX(0.94);">L C/T Level</div>
<svg style="position:absolute;left:757.2px;top:1447.3px;" width="100.0" height="100.0" viewBox="0 0 100.0 100.0"><defs><linearGradient id="kg4" x1="0" y1="0" x2="0" y2="1"><stop offset="0" stop-color="#7e7e7e"/><stop offset="1" stop-color="#474747"/></linearGradient></defs><path d="M25.57,79.11 A38,38 0 1 1 74.43,79.11" fill="none" stroke="#474747" stroke-width="5"/><path d="M25.57,79.11 A38,38 0 1 1 79.11,25.57" fill="none" stroke="#f98b1b" stroke-width="5"/><circle cx="50" cy="50" r="29.2" fill="#242424"/><circle cx="50" cy="50" r="27" fill="url(#kg4)"/><line x1="55.36" y1="45.50" x2="70.30" y2="32.97" stroke="#ededed" stroke-width="5.2"/></svg>
<svg style="position:absolute;left:858.2px;top:1482.5px;" width="18.0" height="24.0" viewBox="0 0 18.0 24.0"><path d="M8.5,1 L8.5,14 M2,7.5 L15,7.5" stroke="#9a9a9a" stroke-width="2.6"/><rect x="0.5" y="18.5" width="16" height="2.8" fill="#9a9a9a"/></svg>
<svg style="position:absolute;left:787.2px;top:1547.0px;" width="44.0" height="18.0" viewBox="0 0 44.0 18.0"><circle cx="9" cy="9" r="7.9" fill="#d6f5fd"/><rect x="9" y="7.6" width="24" height="2.8" fill="#d6f5fd"/><polygon points="30,0.5 40.5,9 30,17.5" fill="#d6f5fd"/></svg>
<div style="left:889.2px;top:1420.0px;width:152.7px;height:153.5px;border-radius:8px;background:#2c2c2c;"></div>
<div class="t" style="left:865.7px;top:1427.8px;width:200px;text-align:center;font-size:25px;line-height:25px;color:#f2f2f2;transform:scaleX(0.94);">M C/T Level</div>
<svg style="position:absolute;left:916.2px;top:1447.3px;" width="100.0" height="100.0" viewBox="0 0 100.0 100.0"><defs><linearGradient id="kg5" x1="0" y1="0" x2="0" y2="1"><stop offset="0" stop-color="#7e7e7e"/><stop offset="1" stop-color="#474747"/></linearGradient></defs><path d="M25.57,79.11 A38,38 0 1 1 74.43,79.11" fill="none" stroke="#474747" stroke-width="5"/><path d="M25.57,79.11 A38,38 0 1 1 86.71,40.16" fill="none" stroke="#f98b1b" stroke-width="5"/><circle cx="50" cy="50" r="29.2" fill="#242424"/><circle cx="50" cy="50" r="27" fill="url(#kg5)"/><line x1="56.76" y1="48.19" x2="75.60" y2="43.14" stroke="#ededed" stroke-width="5.2"/></svg>
<svg style="position:absolute;left:1017.2px;top:1482.5px;" width="18.0" height="24.0" viewBox="0 0 18.0 24.0"><path d="M8.5,1 L8.5,14 M2,7.5 L15,7.5" stroke="#9a9a9a" stroke-width="2.6"/><rect x="0.5" y="18.5" width="16" height="2.8" fill="#9a9a9a"/></svg>
<svg style="position:absolute;left:946.2px;top:1547.0px;" width="44.0" height="18.0" viewBox="0 0 44.0 18.0"><circle cx="9" cy="9" r="7.9" fill="#d6f5fd"/><rect x="9" y="7.6" width="24" height="2.8" fill="#d6f5fd"/><polygon points="30,0.5 40.5,9 30,17.5" fill="#d6f5fd"/></svg>
<div style="left:1048.2px;top:1420.0px;width:152.7px;height:153.5px;border-radius:8px;background:#2c2c2c;"></div>
<div class="t" style="left:1024.7px;top:1427.8px;width:200px;text-align:center;font-size:25px;line-height:25px;color:#f2f2f2;transform:scaleX(0.94);">H C/T Level</div>
<svg style="position:absolute;left:1075.2px;top:1447.3px;" width="100.0" height="100.0" viewBox="0 0 100.0 100.0"><defs><linearGradient id="kg6" x1="0" y1="0" x2="0" y2="1"><stop offset="0" stop-color="#7e7e7e"/><stop offset="1" stop-color="#474747"/></linearGradient></defs><path d="M25.57,79.11 A38,38 0 1 1 74.43,79.11" fill="none" stroke="#474747" stroke-width="5"/><path d="M25.57,79.11 A38,38 0 1 1 87.86,46.69" fill="none" stroke="#f98b1b" stroke-width="5"/><circle cx="50" cy="50" r="29.2" fill="#242424"/><circle cx="50" cy="50" r="27" fill="url(#kg6)"/><line x1="56.97" y1="49.39" x2="76.40" y2="47.69" stroke="#ededed" stroke-width="5.2"/></svg>
<svg style="position:absolute;left:1176.2px;top:1482.5px;" width="18.0" height="24.0" viewBox="0 0 18.0 24.0"><path d="M8.5,1 L8.5,14 M2,7.5 L15,7.5" stroke="#9a9a9a" stroke-width="2.6"/><rect x="0.5" y="18.5" width="16" height="2.8" fill="#9a9a9a"/></svg>
<svg style="position:absolute;left:1105.2px;top:1547.0px;" width="44.0" height="18.0" viewBox="0 0 44.0 18.0"><circle cx="9" cy="9" r="7.9" fill="#d6f5fd"/><rect x="9" y="7.6" width="24" height="2.8" fill="#d6f5fd"/><polygon points="30,0.5 40.5,9 30,17.5" fill="#d6f5fd"/></svg>
<div style="left:1207.2px;top:1420.0px;width:152.7px;height:153.5px;border-radius:8px;background:#2c2c2c;"></div>
<div class="t" style="left:1183.7px;top:1427.8px;width:200px;text-align:center;font-size:25px;line-height:25px;color:#f2f2f2;transform:scaleX(0.94);">CL/RS Level</div>
<svg style="position:absolute;left:1234.2px;top:1447.3px;" width="100.0" height="100.0" viewBox="0 0 100.0 100.0"><defs><linearGradient id="kg7" x1="0" y1="0" x2="0" y2="1"><stop offset="0" stop-color="#7e7e7e"/><stop offset="1" stop-color="#474747"/></linearGradient></defs><path d="M25.57,79.11 A38,38 0 1 1 74.43,79.11" fill="none" stroke="#474747" stroke-width="5"/><path d="M25.57,79.11 A38,38 0 1 1 82.23,29.86" fill="none" stroke="#f98b1b" stroke-width="5"/><circle cx="50" cy="50" r="29.2" fill="#242424"/><circle cx="50" cy="50" r="27" fill="url(#kg7)"/><line x1="55.94" y1="46.29" x2="72.47" y2="35.96" stroke="#ededed" stroke-width="5.2"/></svg>
<svg style="position:absolute;left:1335.2px;top:1482.5px;" width="18.0" height="24.0" viewBox="0 0 18.0 24.0"><path d="M8.5,1 L8.5,14 M2,7.5 L15,7.5" stroke="#9a9a9a" stroke-width="2.6"/><rect x="0.5" y="18.5" width="16" height="2.8" fill="#9a9a9a"/></svg>
<svg style="position:absolute;left:1264.2px;top:1547.0px;" width="44.0" height="18.0" viewBox="0 0 44.0 18.0"><circle cx="9" cy="9" r="7.9" fill="#d6f5fd"/><rect x="9" y="7.6" width="24" height="2.8" fill="#d6f5fd"/><polygon points="30,0.5 40.5,9 30,17.5" fill="#d6f5fd"/></svg>
<div style="left:1366.2px;top:1420.0px;width:152.7px;height:153.5px;border-radius:8px;background:#2c2c2c;"></div>
<div class="t" style="left:1342.7px;top:1427.8px;width:200px;text-align:center;font-size:25px;line-height:25px;color:#f2f2f2;transform:scaleX(0.94);">MA/CP Level</div>
<svg style="position:absolute;left:1393.2px;top:1447.3px;" width="100.0" height="100.0" viewBox="0 0 100.0 100.0"><defs><linearGradient id="kg8" x1="0" y1="0" x2="0" y2="1"><stop offset="0" stop-color="#7e7e7e"/><stop offset="1" stop-color="#474747"/></linearGradient></defs><path d="M25.57,79.11 A38,38 0 1 1 74.43,79.11" fill="none" stroke="#474747" stroke-width="5"/><path d="M25.57,79.11 A38,38 0 1 1 84.44,33.94" fill="none" stroke="#f98b1b" stroke-width="5"/><circle cx="50" cy="50" r="29.2" fill="#242424"/><circle cx="50" cy="50" r="27" fill="url(#kg8)"/><line x1="56.34" y1="47.04" x2="74.02" y2="38.80" stroke="#ededed" stroke-width="5.2"/></svg>
<svg style="position:absolute;left:1494.2px;top:1482.5px;" width="18.0" height="24.0" viewBox="0 0 18.0 24.0"><path d="M8.5,1 L8.5,14 M2,7.5 L15,7.5" stroke="#9a9a9a" stroke-width="2.6"/><rect x="0.5" y="18.5" width="16" height="2.8" fill="#9a9a9a"/></svg>
<svg style="position:absolute;left:1423.2px;top:1547.0px;" width="44.0" height="18.0" viewBox="0 0 44.0 18.0"><circle cx="9" cy="9" r="7.9" fill="#d6f5fd"/><rect x="9" y="7.6" width="24" height="2.8" fill="#d6f5fd"/><polygon points="30,0.5 40.5,9 30,17.5" fill="#d6f5fd"/></svg>
<div style="left:1525.2px;top:1420.0px;width:152.7px;height:153.5px;border-radius:8px;background:#2c2c2c;"></div>
<div class="t" style="left:1501.7px;top:1427.8px;width:200px;text-align:center;font-size:25px;line-height:25px;color:#f2f2f2;transform:scaleX(0.94);">CB Level</div>
<svg style="position:absolute;left:1552.2px;top:1447.3px;" width="100.0" height="100.0" viewBox="0 0 100.0 100.0"><defs><linearGradient id="kg9" x1="0" y1="0" x2="0" y2="1"><stop offset="0" stop-color="#7e7e7e"/><stop offset="1" stop-color="#474747"/></linearGradient></defs><path d="M25.57,79.11 A38,38 0 1 1 74.43,79.11" fill="none" stroke="#474747" stroke-width="5"/><path d="M25.57,79.11 A38,38 0 1 1 87.86,46.69" fill="none" stroke="#f98b1b" stroke-width="5"/><circle cx="50" cy="50" r="29.2" fill="#242424"/><circle cx="50" cy="50" r="27" fill="url(#kg9)"/><line x1="56.97" y1="49.39" x2="76.40" y2="47.69" stroke="#ededed" stroke-width="5.2"/></svg>
<svg style="position:absolute;left:1653.2px;top:1482.5px;" width="18.0" height="24.0" viewBox="0 0 18.0 24.0"><path d="M8.5,1 L8.5,14 M2,7.5 L15,7.5" stroke="#9a9a9a" stroke-width="2.6"/><rect x="0.5" y="18.5" width="16" height="2.8" fill="#9a9a9a"/></svg>
<svg style="position:absolute;left:1582.2px;top:1547.0px;" width="44.0" height="18.0" viewBox="0 0 44.0 18.0"><circle cx="9" cy="9" r="7.9" fill="#d6f5fd"/><rect x="9" y="7.6" width="24" height="2.8" fill="#d6f5fd"/><polygon points="30,0.5 40.5,9 30,17.5" fill="#d6f5fd"/></svg>
<div style="left:1684.2px;top:1420.0px;width:152.7px;height:153.5px;border-radius:8px;background:#2c2c2c;"></div>
<div class="t" style="left:1660.7px;top:1427.8px;width:200px;text-align:center;font-size:25px;line-height:25px;color:#f2f2f2;transform:scaleX(0.94);">CY Level</div>
<svg style="position:absolute;left:1711.2px;top:1447.3px;" width="100.0" height="100.0" viewBox="0 0 100.0 100.0"><defs><linearGradient id="kg10" x1="0" y1="0" x2="0" y2="1"><stop offset="0" stop-color="#7e7e7e"/><stop offset="1" stop-color="#474747"/></linearGradient></defs><path d="M25.57,79.11 A38,38 0 1 1 74.43,79.11" fill="none" stroke="#474747" stroke-width="5"/><path d="M25.57,79.11 A38,38 0 1 1 87.86,46.69" fill="none" stroke="#f98b1b" stroke-width="5"/><circle cx="50" cy="50" r="29.2" fill="#242424"/><circle cx="50" cy="50" r="27" fill="url(#kg10)"/><line x1="56.97" y1="49.39" x2="76.40" y2="47.69" stroke="#ededed" stroke-width="5.2"/></svg>
<svg style="position:absolute;left:1812.2px;top:1482.5px;" width="18.0" height="24.0" viewBox="0 0 18.0 24.0"><path d="M8.5,1 L8.5,14 M2,7.5 L15,7.5" stroke="#9a9a9a" stroke-width="2.6"/><rect x="0.5" y="18.5" width="16" height="2.8" fill="#9a9a9a"/></svg>
<svg style="position:absolute;left:1741.2px;top:1547.0px;" width="44.0" height="18.0" viewBox="0 0 44.0 18.0"><circle cx="9" cy="9" r="7.9" fill="#d6f5fd"/><rect x="9" y="7.6" width="24" height="2.8" fill="#d6f5fd"/><polygon points="30,0.5 40.5,9 30,17.5" fill="#d6f5fd"/></svg>
<div style="left:1843.2px;top:1420.0px;width:152.7px;height:153.5px;border-radius:8px;background:#2c2c2c;"></div>
<div class="t" style="left:1819.7px;top:1427.8px;width:200px;text-align:center;font-size:25px;line-height:25px;color:#f2f2f2;transform:scaleX(0.94);">OH Level</div>
<svg style="position:absolute;left:1870.2px;top:1447.3px;" width="100.0" height="100.0" viewBox="0 0 100.0 100.0"><defs><linearGradient id="kg11" x1="0" y1="0" x2="0" y2="1"><stop offset="0" stop-color="#7e7e7e"/><stop offset="1" stop-color="#474747"/></linearGradient></defs><path d="M25.57,79.11 A38,38 0 1 1 74.43,79.11" fill="none" stroke="#474747" stroke-width="5"/><path d="M25.57,79.11 A38,38 0 1 1 82.91,31.00" fill="none" stroke="#f98b1b" stroke-width="5"/><circle cx="50" cy="50" r="29.2" fill="#242424"/><circle cx="50" cy="50" r="27" fill="url(#kg11)"/><line x1="56.06" y1="46.50" x2="72.95" y2="36.75" stroke="#ededed" stroke-width="5.2"/></svg>
<svg style="position:absolute;left:1971.2px;top:1482.5px;" width="18.0" height="24.0" viewBox="0 0 18.0 24.0"><path d="M8.5,1 L8.5,14 M2,7.5 L15,7.5" stroke="#9a9a9a" stroke-width="2.6"/><rect x="0.5" y="18.5" width="16" height="2.8" fill="#9a9a9a"/></svg>
<svg style="position:absolute;left:1900.2px;top:1547.0px;" width="44.0" height="18.0" viewBox="0 0 44.0 18.0"><circle cx="9" cy="9" r="7.9" fill="#d6f5fd"/><rect x="9" y="7.6" width="24" height="2.8" fill="#d6f5fd"/><polygon points="30,0.5 40.5,9 30,17.5" fill="#d6f5fd"/></svg>
<div style="left:2002.2px;top:1420.0px;width:152.7px;height:153.5px;border-radius:8px;background:#2c2c2c;"></div>
<div class="t" style="left:1978.7px;top:1427.8px;width:200px;text-align:center;font-size:25px;line-height:25px;color:#f2f2f2;transform:scaleX(0.94);">CH Level</div>
<svg style="position:absolute;left:2029.2px;top:1447.3px;" width="100.0" height="100.0" viewBox="0 0 100.0 100.0"><defs><linearGradient id="kg12" x1="0" y1="0" x2="0" y2="1"><stop offset="0" stop-color="#7e7e7e"/><stop offset="1" stop-color="#474747"/></linearGradient></defs><path d="M25.57,79.11 A38,38 0 1 1 74.43,79.11" fill="none" stroke="#474747" stroke-width="5"/><path d="M25.57,79.11 A38,38 0 1 1 87.86,46.69" fill="none" stroke="#f98b1b" stroke-width="5"/><circle cx="50" cy="50" r="29.2" fill="#242424"/><circle cx="50" cy="50" r="27" fill="url(#kg12)"/><line x1="56.97" y1="49.39" x2="76.40" y2="47.69" stroke="#ededed" stroke-width="5.2"/></svg>
<svg style="position:absolute;left:2130.2px;top:1482.5px;" width="18.0" height="24.0" viewBox="0 0 18.0 24.0"><path d="M8.5,1 L8.5,14 M2,7.5 L15,7.5" stroke="#9a9a9a" stroke-width="2.6"/><rect x="0.5" y="18.5" width="16" height="2.8" fill="#9a9a9a"/></svg>
<svg style="position:absolute;left:2059.2px;top:1547.0px;" width="44.0" height="18.0" viewBox="0 0 44.0 18.0"><circle cx="9" cy="9" r="7.9" fill="#d6f5fd"/><rect x="9" y="7.6" width="24" height="2.8" fill="#d6f5fd"/><polygon points="30,0.5 40.5,9 30,17.5" fill="#d6f5fd"/></svg>
<div style="left:253.2px;top:1581.3px;width:152.7px;height:153.5px;border-radius:8px;background:#3f3f3f;"></div>
<svg style="position:absolute;left:317.5px;top:1646.0px;" width="24.0" height="24.0" viewBox="0 0 24.0 24.0"><path d="M12,1 L12,23 M1,12 L23,12" stroke="#8a8a8a" stroke-width="4.4"/></svg>
<div style="left:412.2px;top:1581.3px;width:152.7px;height:153.5px;border-radius:8px;background:#2c2c2c;"></div>
<div class="t" style="left:388.7px;top:1589.1px;width:200px;text-align:center;font-size:25px;line-height:25px;color:#f2f2f2;transform:scaleX(0.94);">BD Tone</div>
<svg style="position:absolute;left:439.2px;top:1608.6px;" width="100.0" height="100.0" viewBox="0 0 100.0 100.0"><defs><linearGradient id="kg13" x1="0" y1="0" x2="0" y2="1"><stop offset="0" stop-color="#7e7e7e"/><stop offset="1" stop-color="#474747"/></linearGradient></defs><path d="M25.57,79.11 A38,38 0 1 1 74.43,79.11" fill="none" stroke="#474747" stroke-width="5"/><path d="M25.57,79.11 A38,38 0 1 1 84.44,33.94" fill="none" stroke="#f98b1b" stroke-width="5"/><circle cx="50" cy="50" r="29.2" fill="#242424"/><circle cx="50" cy="50" r="27" fill="url(#kg13)"/><line x1="56.34" y1="47.04" x2="74.02" y2="38.80" stroke="#ededed" stroke-width="5.2"/></svg>
<svg style="position:absolute;left:540.2px;top:1643.8px;" width="18.0" height="24.0" viewBox="0 0 18.0 24.0"><path d="M8.5,1 L8.5,14 M2,7.5 L15,7.5" stroke="#9a9a9a" stroke-width="2.6"/><rect x="0.5" y="18.5" width="16" height="2.8" fill="#9a9a9a"/></svg>
<svg style="position:absolute;left:469.2px;top:1708.3px;" width="44.0" height="18.0" viewBox="0 0 44.0 18.0"><circle cx="9" cy="9" r="7.9" fill="#d6f5fd"/><rect x="9" y="7.6" width="24" height="2.8" fill="#d6f5fd"/><polygon points="30,0.5 40.5,9 30,17.5" fill="#d6f5fd"/></svg>
<div style="left:571.2px;top:1581.3px;width:152.7px;height:153.5px;border-radius:8px;background:#2c2c2c;"></div>
<div class="t" style="left:547.7px;top:1589.1px;width:200px;text-align:center;font-size:25px;line-height:25px;color:#f2f2f2;transform:scaleX(0.94);">SD Tone</div>
<svg style="position:absolute;left:598.2px;top:1608.6px;" width="100.0" height="100.0" viewBox="0 0 100.0 100.0"><defs><linearGradient id="kg14" x1="0" y1="0" x2="0" y2="1"><stop offset="0" stop-color="#7e7e7e"/><stop offset="1" stop-color="#474747"/></linearGradient></defs><path d="M25.57,79.11 A38,38 0 1 1 74.43,79.11" fill="none" stroke="#474747" stroke-width="5"/><path d="M25.57,79.11 A38,38 0 1 1 86.14,38.26" fill="none" stroke="#f98b1b" stroke-width="5"/><circle cx="50" cy="50" r="29.2" fill="#242424"/><circle cx="50" cy="50" r="27" fill="url(#kg14)"/><line x1="56.66" y1="47.84" x2="75.20" y2="41.81" stroke="#ededed" stroke-width="5.2"/></svg>
<svg style="position:absolute;left:699.2px;top:1643.8px;" width="18.0" height="24.0" viewBox="0 0 18.0 24.0"><path d="M8.5,1 L8.5,14 M2,7.5 L15,7.5" stroke="#9a9a9a" stroke-width="2.6"/><rect x="0.5" y="18.5" width="16" height="2.8" fill="#9a9a9a"/></svg>
<svg style="position:absolute;left:628.2px;top:1708.3px;" width="44.0" height="18.0" viewBox="0 0 44.0 18.0"><circle cx="9" cy="9" r="7.9" fill="#d6f5fd"/><rect x="9" y="7.6" width="24" height="2.8" fill="#d6f5fd"/><polygon points="30,0.5 40.5,9 30,17.5" fill="#d6f5fd"/></svg>
<div style="left:730.2px;top:1581.3px;width:152.7px;height:153.5px;border-radius:8px;background:#2c2c2c;"></div>
<div class="t" style="left:706.7px;top:1589.1px;width:200px;text-align:center;font-size:25px;line-height:25px;color:#f2f2f2;transform:scaleX(0.94);">LC Tuning</div>
<svg style="position:absolute;left:757.2px;top:1608.6px;" width="100.0" height="100.0" viewBox="0 0 100.0 100.0"><defs><linearGradient id="kg15" x1="0" y1="0" x2="0" y2="1"><stop offset="0" stop-color="#7e7e7e"/><stop offset="1" stop-color="#474747"/></linearGradient></defs><path d="M25.57,79.11 A38,38 0 1 1 74.43,79.11" fill="none" stroke="#474747" stroke-width="5"/><circle cx="50" cy="50" r="29.2" fill="#242424"/><circle cx="50" cy="50" r="27" fill="url(#kg15)"/><line x1="45.50" y1="55.36" x2="32.97" y2="70.30" stroke="#ededed" stroke-width="5.2"/></svg>
<svg style="position:absolute;left:858.2px;top:1643.8px;" width="18.0" height="24.0" viewBox="0 0 18.0 24.0"><path d="M8.5,1 L8.5,14 M2,7.5 L15,7.5" stroke="#9a9a9a" stroke-width="2.6"/><rect x="0.5" y="18.5" width="16" height="2.8" fill="#9a9a9a"/></svg>
<svg style="position:absolute;left:787.2px;top:1708.3px;" width="44.0" height="18.0" viewBox="0 0 44.0 18.0"><circle cx="9" cy="9" r="7.9" fill="#38cdf3"/><rect x="9" y="7.6" width="24" height="2.8" fill="#38cdf3"/><polygon points="30,0.5 40.5,9 30,17.5" fill="#38cdf3"/></svg>
<div style="left:889.2px;top:1581.3px;width:152.7px;height:153.5px;border-radius:8px;background:#2c2c2c;"></div>
<div class="t" style="left:865.7px;top:1589.1px;width:200px;text-align:center;font-size:25px;line-height:25px;color:#f2f2f2;transform:scaleX(0.94);">MC Tuning</div>
<svg style="position:absolute;left:916.2px;top:1608.6px;" width="100.0" height="100.0" viewBox="0 0 100.0 100.0"><defs><linearGradient id="kg16" x1="0" y1="0" x2="0" y2="1"><stop offset="0" stop-color="#7e7e7e"/><stop offset="1" stop-color="#474747"/></linearGradient></defs><path d="M25.57,79.11 A38,38 0 1 1 74.43,79.11" fill="none" stroke="#474747" stroke-width="5"/><circle cx="50" cy="50" r="29.2" fill="#242424"/><circle cx="50" cy="50" r="27" fill="url(#kg16)"/><line x1="45.50" y1="55.36" x2="32.97" y2="70.30" stroke="#ededed" stroke-width="5.2"/></svg>
<svg style="position:absolute;left:1017.2px;top:1643.8px;" width="18.0" height="24.0" viewBox="0 0 18.0 24.0"><path d="M8.5,1 L8.5,14 M2,7.5 L15,7.5" stroke="#9a9a9a" stroke-width="2.6"/><rect x="0.5" y="18.5" width="16" height="2.8" fill="#9a9a9a"/></svg>
<svg style="position:absolute;left:946.2px;top:1708.3px;" width="44.0" height="18.0" viewBox="0 0 44.0 18.0"><circle cx="9" cy="9" r="7.9" fill="#38cdf3"/><rect x="9" y="7.6" width="24" height="2.8" fill="#38cdf3"/><polygon points="30,0.5 40.5,9 30,17.5" fill="#38cdf3"/></svg>
<div style="left:1048.2px;top:1581.3px;width:152.7px;height:153.5px;border-radius:8px;background:#2c2c2c;"></div>
<div class="t" style="left:1024.7px;top:1589.1px;width:200px;text-align:center;font-size:25px;line-height:25px;color:#f2f2f2;transform:scaleX(0.94);">HC Tuning</div>
<svg style="position:absolute;left:1075.2px;top:1608.6px;" width="100.0" height="100.0" viewBox="0 0 100.0 100.0"><defs><linearGradient id="kg17" x1="0" y1="0" x2="0" y2="1"><stop offset="0" stop-color="#7e7e7e"/><stop offset="1" stop-color="#474747"/></linearGradient></defs><path d="M25.57,79.11 A38,38 0 1 1 74.43,79.11" fill="none" stroke="#474747" stroke-width="5"/><path d="M25.57,79.11 A38,38 0 0 1 53.31,12.14" fill="none" stroke="#f98b1b" stroke-width="5"/><circle cx="50" cy="50" r="29.2" fill="#242424"/><circle cx="50" cy="50" r="27" fill="url(#kg17)"/><line x1="50.61" y1="43.03" x2="52.31" y2="23.60" stroke="#ededed" stroke-width="5.2"/></svg>
<svg style="position:absolute;left:1176.2px;top:1643.8px;" width="18.0" height="24.0" viewBox="0 0 18.0 24.0"><path d="M8.5,1 L8.5,14 M2,7.5 L15,7.5" stroke="#9a9a9a" stroke-width="2.6"/><rect x="0.5" y="18.5" width="16" height="2.8" fill="#9a9a9a"/></svg>
<svg style="position:absolute;left:1105.2px;top:1708.3px;" width="44.0" height="18.0" viewBox="0 0 44.0 18.0"><circle cx="9" cy="9" r="7.9" fill="#a6e5f8"/><rect x="9" y="7.6" width="24" height="2.8" fill="#a6e5f8"/><polygon points="30,0.5 40.5,9 30,17.5" fill="#a6e5f8"/></svg>
<div style="left:1207.2px;top:1581.3px;width:152.7px;height:153.5px;border-radius:8px;background:#3f3f3f;"></div>
<svg style="position:absolute;left:1271.5px;top:1646.0px;" width="24.0" height="24.0" viewBox="0 0 24.0 24.0"><path d="M12,1 L12,23 M1,12 L23,12" stroke="#8a8a8a" stroke-width="4.4"/></svg>
<div style="left:1366.2px;top:1581.3px;width:152.7px;height:153.5px;border-radius:8px;background:#3f3f3f;"></div>
<svg style="position:absolute;left:1430.5px;top:1646.0px;" width="24.0" height="24.0" viewBox="0 0 24.0 24.0"><path d="M12,1 L12,23 M1,12 L23,12" stroke="#8a8a8a" stroke-width="4.4"/></svg>
<div style="left:1525.2px;top:1581.3px;width:152.7px;height:153.5px;border-radius:8px;background:#3f3f3f;"></div>
<svg style="position:absolute;left:1589.5px;top:1646.0px;" width="24.0" height="24.0" viewBox="0 0 24.0 24.0"><path d="M12,1 L12,23 M1,12 L23,12" stroke="#8a8a8a" stroke-width="4.4"/></svg>
<div style="left:1684.2px;top:1581.3px;width:152.7px;height:153.5px;border-radius:8px;background:#2c2c2c;"></div>
<div class="t" style="left:1660.7px;top:1589.1px;width:200px;text-align:center;font-size:25px;line-height:25px;color:#f2f2f2;transform:scaleX(0.94);">CY Tone</div>
<svg style="position:absolute;left:1711.2px;top:1608.6px;" width="100.0" height="100.0" viewBox="0 0 100.0 100.0"><defs><linearGradient id="kg18" x1="0" y1="0" x2="0" y2="1"><stop offset="0" stop-color="#7e7e7e"/><stop offset="1" stop-color="#474747"/></linearGradient></defs><path d="M25.57,79.11 A38,38 0 1 1 74.43,79.11" fill="none" stroke="#474747" stroke-width="5"/><path d="M25.57,79.11 A38,38 0 0 1 63.00,14.29" fill="none" stroke="#f98b1b" stroke-width="5"/><circle cx="50" cy="50" r="29.2" fill="#242424"/><circle cx="50" cy="50" r="27" fill="url(#kg18)"/><line x1="52.39" y1="43.42" x2="59.06" y2="25.10" stroke="#ededed" stroke-width="5.2"/></svg>
<svg style="position:absolute;left:1812.2px;top:1643.8px;" width="18.0" height="24.0" viewBox="0 0 18.0 24.0"><path d="M8.5,1 L8.5,14 M2,7.5 L15,7.5" stroke="#9a9a9a" stroke-width="2.6"/><rect x="0.5" y="18.5" width="16" height="2.8" fill="#9a9a9a"/></svg>
<svg style="position:absolute;left:1741.2px;top:1708.3px;" width="44.0" height="18.0" viewBox="0 0 44.0 18.0"><circle cx="9" cy="9" r="7.9" fill="#a6e5f8"/><rect x="9" y="7.6" width="24" height="2.8" fill="#a6e5f8"/><polygon points="30,0.5 40.5,9 30,17.5" fill="#a6e5f8"/></svg>
<div style="left:1843.2px;top:1581.3px;width:152.7px;height:153.5px;border-radius:8px;background:#3f3f3f;"></div>
<svg style="position:absolute;left:1907.5px;top:1646.0px;" width="24.0" height="24.0" viewBox="0 0 24.0 24.0"><path d="M12,1 L12,23 M1,12 L23,12" stroke="#8a8a8a" stroke-width="4.4"/></svg>
<div style="left:2002.2px;top:1581.3px;width:152.7px;height:153.5px;border-radius:8px;background:#3f3f3f;"></div>
<svg style="position:absolute;left:2066.6px;top:1646.0px;" width="24.0" height="24.0" viewBox="0 0 24.0 24.0"><path d="M12,1 L12,23 M1,12 L23,12" stroke="#8a8a8a" stroke-width="4.4"/></svg>
<div style="left:253.2px;top:1742.3px;width:152.7px;height:153.5px;border-radius:8px;background:#3f3f3f;"></div>
<svg style="position:absolute;left:317.5px;top:1807.0px;" width="24.0" height="24.0" viewBox="0 0 24.0 24.0"><path d="M12,1 L12,23 M1,12 L23,12" stroke="#8a8a8a" stroke-width="4.4"/></svg>
<div style="left:412.2px;top:1742.3px;width:152.7px;height:153.5px;border-radius:8px;background:#2c2c2c;"></div>
<div class="t" style="left:388.7px;top:1750.1px;width:200px;text-align:center;font-size:25px;line-height:25px;color:#f2f2f2;transform:scaleX(0.94);">BD Decay</div>
<svg style="position:absolute;left:439.2px;top:1769.6px;" width="100.0" height="100.0" viewBox="0 0 100.0 100.0"><defs><linearGradient id="kg19" x1="0" y1="0" x2="0" y2="1"><stop offset="0" stop-color="#7e7e7e"/><stop offset="1" stop-color="#474747"/></linearGradient></defs><path d="M25.57,79.11 A38,38 0 1 1 74.43,79.11" fill="none" stroke="#474747" stroke-width="5"/><path d="M25.57,79.11 A38,38 0 1 1 76.87,23.13" fill="none" stroke="#f98b1b" stroke-width="5"/><circle cx="50" cy="50" r="29.2" fill="#242424"/><circle cx="50" cy="50" r="27" fill="url(#kg19)"/><line x1="54.95" y1="45.05" x2="68.74" y2="31.26" stroke="#ededed" stroke-width="5.2"/></svg>
<svg style="position:absolute;left:540.2px;top:1804.8px;" width="18.0" height="24.0" viewBox="0 0 18.0 24.0"><path d="M8.5,1 L8.5,14 M2,7.5 L15,7.5" stroke="#9a9a9a" stroke-width="2.6"/><rect x="0.5" y="18.5" width="16" height="2.8" fill="#9a9a9a"/></svg>
<svg style="position:absolute;left:469.2px;top:1869.3px;" width="44.0" height="18.0" viewBox="0 0 44.0 18.0"><circle cx="9" cy="9" r="7.9" fill="#d6f5fd"/><rect x="9" y="7.6" width="24" height="2.8" fill="#d6f5fd"/><polygon points="30,0.5 40.5,9 30,17.5" fill="#d6f5fd"/></svg>
<div style="left:571.2px;top:1742.3px;width:152.7px;height:153.5px;border-radius:8px;background:#2c2c2c;"></div>
<div class="t" style="left:547.7px;top:1750.1px;width:200px;text-align:center;font-size:25px;line-height:25px;color:#f2f2f2;transform:scaleX(0.94);">SD Snappy</div>
<svg style="position:absolute;left:598.2px;top:1769.6px;" width="100.0" height="100.0" viewBox="0 0 100.0 100.0"><defs><linearGradient id="kg20" x1="0" y1="0" x2="0" y2="1"><stop offset="0" stop-color="#7e7e7e"/><stop offset="1" stop-color="#474747"/></linearGradient></defs><path d="M25.57,79.11 A38,38 0 1 1 74.43,79.11" fill="none" stroke="#474747" stroke-width="5"/><path d="M25.57,79.11 A38,38 0 1 1 87.86,53.31" fill="none" stroke="#f98b1b" stroke-width="5"/><circle cx="50" cy="50" r="29.2" fill="#242424"/><circle cx="50" cy="50" r="27" fill="url(#kg20)"/><line x1="56.97" y1="50.61" x2="76.40" y2="52.31" stroke="#ededed" stroke-width="5.2"/></svg>
<svg style="position:absolute;left:699.2px;top:1804.8px;" width="18.0" height="24.0" viewBox="0 0 18.0 24.0"><path d="M8.5,1 L8.5,14 M2,7.5 L15,7.5" stroke="#9a9a9a" stroke-width="2.6"/><rect x="0.5" y="18.5" width="16" height="2.8" fill="#9a9a9a"/></svg>
<svg style="position:absolute;left:628.2px;top:1869.3px;" width="44.0" height="18.0" viewBox="0 0 44.0 18.0"><circle cx="9" cy="9" r="7.9" fill="#e4f8fe"/><rect x="9" y="7.6" width="24" height="2.8" fill="#e4f8fe"/><polygon points="30,0.5 40.5,9 30,17.5" fill="#e4f8fe"/></svg>
<div style="left:730.2px;top:1742.3px;width:152.7px;height:153.5px;border-radius:8px;background:#2c2c2c;"></div>
<div class="t" style="left:706.7px;top:1750.1px;width:200px;text-align:center;font-size:25px;line-height:25px;color:#f2f2f2;transform:scaleX(0.94);">LT Tuning</div>
<svg style="position:absolute;left:757.2px;top:1769.6px;" width="100.0" height="100.0" viewBox="0 0 100.0 100.0"><defs><linearGradient id="kg21" x1="0" y1="0" x2="0" y2="1"><stop offset="0" stop-color="#7e7e7e"/><stop offset="1" stop-color="#474747"/></linearGradient></defs><path d="M25.57,79.11 A38,38 0 1 1 74.43,79.11" fill="none" stroke="#474747" stroke-width="5"/><circle cx="50" cy="50" r="29.2" fill="#242424"/><circle cx="50" cy="50" r="27" fill="url(#kg21)"/><line x1="45.50" y1="55.36" x2="32.97" y2="70.30" stroke="#ededed" stroke-width="5.2"/></svg>
<svg style="position:absolute;left:858.2px;top:1804.8px;" width="18.0" height="24.0" viewBox="0 0 18.0 24.0"><path d="M8.5,1 L8.5,14 M2,7.5 L15,7.5" stroke="#9a9a9a" stroke-width="2.6"/><rect x="0.5" y="18.5" width="16" height="2.8" fill="#9a9a9a"/></svg>
<svg style="position:absolute;left:787.2px;top:1869.3px;" width="44.0" height="18.0" viewBox="0 0 44.0 18.0"><circle cx="9" cy="9" r="7.9" fill="#38cdf3"/><rect x="9" y="7.6" width="24" height="2.8" fill="#38cdf3"/><polygon points="30,0.5 40.5,9 30,17.5" fill="#38cdf3"/></svg>
<div style="left:889.2px;top:1742.3px;width:152.7px;height:153.5px;border-radius:8px;background:#2c2c2c;"></div>
<div class="t" style="left:865.7px;top:1750.1px;width:200px;text-align:center;font-size:25px;line-height:25px;color:#f2f2f2;transform:scaleX(0.94);">MT Tuning</div>
<svg style="position:absolute;left:916.2px;top:1769.6px;" width="100.0" height="100.0" viewBox="0 0 100.0 100.0"><defs><linearGradient id="kg22" x1="0" y1="0" x2="0" y2="1"><stop offset="0" stop-color="#7e7e7e"/><stop offset="1" stop-color="#474747"/></linearGradient></defs><path d="M25.57,79.11 A38,38 0 1 1 74.43,79.11" fill="none" stroke="#474747" stroke-width="5"/><circle cx="50" cy="50" r="29.2" fill="#242424"/><circle cx="50" cy="50" r="27" fill="url(#kg22)"/><line x1="45.50" y1="55.36" x2="32.97" y2="70.30" stroke="#ededed" stroke-width="5.2"/></svg>
<svg style="position:absolute;left:1017.2px;top:1804.8px;" width="18.0" height="24.0" viewBox="0 0 18.0 24.0"><path d="M8.5,1 L8.5,14 M2,7.5 L15,7.5" stroke="#9a9a9a" stroke-width="2.6"/><rect x="0.5" y="18.5" width="16" height="2.8" fill="#9a9a9a"/></svg>
<svg style="position:absolute;left:946.2px;top:1869.3px;" width="44.0" height="18.0" viewBox="0 0 44.0 18.0"><circle cx="9" cy="9" r="7.9" fill="#38cdf3"/><rect x="9" y="7.6" width="24" height="2.8" fill="#38cdf3"/><polygon points="30,0.5 40.5,9 30,17.5" fill="#38cdf3"/></svg>
<div style="left:1048.2px;top:1742.3px;width:152.7px;height:153.5px;border-radius:8px;background:#2c2c2c;"></div>
<div class="t" style="left:1024.7px;top:1750.1px;width:200px;text-align:center;font-size:25px;line-height:25px;color:#f2f2f2;transform:scaleX(0.94);">HT Tuning</div>
<svg style="position:absolute;left:1075.2px;top:1769.6px;" width="100.0" height="100.0" viewBox="0 0 100.0 100.0"><defs><linearGradient id="kg23" x1="0" y1="0" x2="0" y2="1"><stop offset="0" stop-color="#7e7e7e"/><stop offset="1" stop-color="#474747"/></linearGradient></defs><path d="M25.57,79.11 A38,38 0 1 1 74.43,79.11" fill="none" stroke="#474747" stroke-width="5"/><circle cx="50" cy="50" r="29.2" fill="#242424"/><circle cx="50" cy="50" r="27" fill="url(#kg23)"/><line x1="45.50" y1="55.36" x2="32.97" y2="70.30" stroke="#ededed" stroke-width="5.2"/></svg>
<svg style="position:absolute;left:1176.2px;top:1804.8px;" width="18.0" height="24.0" viewBox="0 0 18.0 24.0"><path d="M8.5,1 L8.5,14 M2,7.5 L15,7.5" stroke="#9a9a9a" stroke-width="2.6"/><rect x="0.5" y="18.5" width="16" height="2.8" fill="#9a9a9a"/></svg>
<svg style="position:absolute;left:1105.2px;top:1869.3px;" width="44.0" height="18.0" viewBox="0 0 44.0 18.0"><circle cx="9" cy="9" r="7.9" fill="#38cdf3"/><rect x="9" y="7.6" width="24" height="2.8" fill="#38cdf3"/><polygon points="30,0.5 40.5,9 30,17.5" fill="#38cdf3"/></svg>
<div style="left:1207.2px;top:1742.3px;width:152.7px;height:153.5px;border-radius:8px;background:#3f3f3f;"></div>
<svg style="position:absolute;left:1271.5px;top:1807.0px;" width="24.0" height="24.0" viewBox="0 0 24.0 24.0"><path d="M12,1 L12,23 M1,12 L23,12" stroke="#8a8a8a" stroke-width="4.4"/></svg>
<div style="left:1366.2px;top:1742.3px;width:152.7px;height:153.5px;border-radius:8px;background:#3f3f3f;"></div>
<svg style="position:absolute;left:1430.5px;top:1807.0px;" width="24.0" height="24.0" viewBox="0 0 24.0 24.0"><path d="M12,1 L12,23 M1,12 L23,12" stroke="#8a8a8a" stroke-width="4.4"/></svg>
<div style="left:1525.2px;top:1742.3px;width:152.7px;height:153.5px;border-radius:8px;background:#3f3f3f;"></div>
<svg style="position:absolute;left:1589.5px;top:1807.0px;" width="24.0" height="24.0" viewBox="0 0 24.0 24.0"><path d="M12,1 L12,23 M1,12 L23,12" stroke="#8a8a8a" stroke-width="4.4"/></svg>
<div style="left:1684.2px;top:1742.3px;width:152.7px;height:153.5px;border-radius:8px;background:#2c2c2c;"></div>
<div style="left:1695.2px;top:1789.3px;width:133.0px;height:60.5px;border-radius:7px;background:linear-gradient(#fb8d1b,#ec7d12);"></div>
<div class="t" style="left:1661.2px;top:1806.9px;width:200px;text-align:center;font-size:27px;line-height:27px;color:#1e1206;transform:scaleX(0.93);">CY Long</div>
<svg style="position:absolute;left:1741.2px;top:1869.3px;" width="44.0" height="18.0" viewBox="0 0 44.0 18.0"><circle cx="9" cy="9" r="7.9" fill="#fafafa"/><rect x="9" y="7.6" width="24" height="2.8" fill="#fafafa"/><polygon points="30,0.5 40.5,9 30,17.5" fill="#fafafa"/></svg>
<div style="left:1843.2px;top:1742.3px;width:152.7px;height:153.5px;border-radius:8px;background:#2c2c2c;"></div>
<div class="t" style="left:1819.7px;top:1750.1px;width:200px;text-align:center;font-size:25px;line-height:25px;color:#f2f2f2;transform:scaleX(0.94);">OH Decay</div>
<svg style="position:absolute;left:1870.2px;top:1769.6px;" width="100.0" height="100.0" viewBox="0 0 100.0 100.0"><defs><linearGradient id="kg24" x1="0" y1="0" x2="0" y2="1"><stop offset="0" stop-color="#7e7e7e"/><stop offset="1" stop-color="#474747"/></linearGradient></defs><path d="M25.57,79.11 A38,38 0 1 1 74.43,79.11" fill="none" stroke="#474747" stroke-width="5"/><circle cx="50" cy="50" r="29.2" fill="#242424"/><circle cx="50" cy="50" r="27" fill="url(#kg24)"/><line x1="45.50" y1="55.36" x2="32.97" y2="70.30" stroke="#ededed" stroke-width="5.2"/></svg>
<svg style="position:absolute;left:1971.2px;top:1804.8px;" width="18.0" height="24.0" viewBox="0 0 18.0 24.0"><path d="M8.5,1 L8.5,14 M2,7.5 L15,7.5" stroke="#9a9a9a" stroke-width="2.6"/><rect x="0.5" y="18.5" width="16" height="2.8" fill="#9a9a9a"/></svg>
<svg style="position:absolute;left:1900.2px;top:1869.3px;" width="44.0" height="18.0" viewBox="0 0 44.0 18.0"><circle cx="9" cy="9" r="7.9" fill="#38cdf3"/><rect x="9" y="7.6" width="24" height="2.8" fill="#38cdf3"/><polygon points="30,0.5 40.5,9 30,17.5" fill="#38cdf3"/></svg>
<div style="left:2002.2px;top:1742.3px;width:152.7px;height:153.5px;border-radius:8px;background:#3f3f3f;"></div>
<svg style="position:absolute;left:2066.6px;top:1807.0px;" width="24.0" height="24.0" viewBox="0 0 24.0 24.0"><path d="M12,1 L12,23 M1,12 L23,12" stroke="#8a8a8a" stroke-width="4.4"/></svg>
<div style="left:2162.0px;top:1420.0px;width:56.4px;height:477.0px;background:#3d3d3d;"></div>
<svg style="position:absolute;left:2177.0px;top:1432.0px;" width="26.0" height="26.0" viewBox="0 0 26.0 26.0"><circle cx="13" cy="13" r="10.5" fill="none" stroke="#8a8a8a" stroke-width="3"/><circle cx="7.4" cy="10.9" r="1.6" fill="#8a8a8a"/><circle cx="9.6" cy="8.1" r="1.6" fill="#8a8a8a"/><circle cx="13.0" cy="7.0" r="1.6" fill="#8a8a8a"/><circle cx="16.4" cy="8.1" r="1.6" fill="#8a8a8a"/><circle cx="18.6" cy="10.9" r="1.6" fill="#8a8a8a"/></svg>
<svg style="position:absolute;left:2169.0px;top:1469.0px;overflow:visible;" width="43.0" height="32.2" viewBox="0 0 43.0 32.2"><rect x="1.0" y="1.0" width="7.8" height="7.8" fill="#2a2a2a"/><rect x="1.0" y="11.4" width="7.8" height="7.8" fill="#2a2a2a"/><rect x="1.0" y="21.8" width="7.8" height="7.8" fill="#2a2a2a"/><rect x="11.4" y="1.0" width="7.8" height="7.8" fill="#2a2a2a"/><rect x="11.4" y="11.4" width="7.8" height="7.8" fill="#2a2a2a"/><rect x="11.4" y="21.8" width="7.8" height="7.8" fill="#2a2a2a"/><rect x="21.8" y="1.0" width="7.8" height="7.8" fill="#2a2a2a"/><rect x="21.8" y="11.4" width="7.8" height="7.8" fill="#2a2a2a"/><rect x="21.8" y="21.8" width="7.8" height="7.8" fill="#2a2a2a"/><rect x="32.2" y="1.0" width="7.8" height="7.8" fill="#2a2a2a"/><rect x="32.2" y="11.4" width="7.8" height="7.8" fill="#2a2a2a"/><rect x="32.2" y="21.8" width="7.8" height="7.8" fill="#2a2a2a"/></svg>
<svg style="position:absolute;left:2169.0px;top:1508.0px;overflow:visible;" width="43.0" height="43.0" viewBox="0 0 43.0 43.0"><rect x="1.0" y="1.0" width="7.8" height="7.8" fill="#2a2a2a"/><rect x="1.0" y="11.4" width="7.8" height="7.8" fill="#2a2a2a"/><rect x="1.0" y="21.8" width="7.8" height="7.8" fill="#2a2a2a"/><rect x="1.0" y="32.2" width="7.8" height="7.8" fill="#2a2a2a"/><rect x="11.4" y="1.0" width="7.8" height="7.8" fill="#2a2a2a"/><rect x="11.4" y="11.4" width="7.8" height="7.8" fill="#2a2a2a"/><rect x="11.4" y="21.8" width="7.8" height="7.8" fill="#2a2a2a"/><rect x="11.4" y="32.2" width="7.8" height="7.8" fill="#2a2a2a"/><rect x="21.8" y="1.0" width="7.8" height="7.8" fill="#2a2a2a"/><rect x="21.8" y="11.4" width="7.8" height="7.8" fill="#2a2a2a"/><rect x="21.8" y="21.8" width="7.8" height="7.8" fill="#2a2a2a"/><rect x="21.8" y="32.2" width="7.8" height="7.8" fill="#2a2a2a"/><rect x="32.2" y="1.0" width="7.8" height="7.8" fill="#2a2a2a"/><rect x="32.2" y="11.4" width="7.8" height="7.8" fill="#2a2a2a"/><rect x="32.2" y="21.8" width="7.8" height="7.8" fill="#2a2a2a"/><rect x="32.2" y="32.2" width="7.8" height="7.8" fill="#2a2a2a"/></svg>
<svg style="position:absolute;left:2169.0px;top:1558.3px;overflow:visible;" width="43.0" height="43.0" viewBox="0 0 43.0 43.0"><rect x="1.0" y="1.0" width="7.8" height="7.8" fill="#2a2a2a"/><rect x="1.0" y="11.4" width="7.8" height="7.8" fill="#2a2a2a"/><rect x="1.0" y="21.8" width="7.8" height="7.8" fill="#2a2a2a"/><rect x="1.0" y="32.2" width="7.8" height="7.8" fill="#2a2a2a"/><rect x="11.4" y="1.0" width="7.8" height="7.8" fill="#2a2a2a"/><rect x="11.4" y="11.4" width="7.8" height="7.8" fill="#2a2a2a"/><rect x="11.4" y="21.8" width="7.8" height="7.8" fill="#2a2a2a"/><rect x="11.4" y="32.2" width="7.8" height="7.8" fill="#2a2a2a"/><rect x="21.8" y="1.0" width="7.8" height="7.8" fill="#2a2a2a"/><rect x="21.8" y="11.4" width="7.8" height="7.8" fill="#2a2a2a"/><rect x="21.8" y="21.8" width="7.8" height="7.8" fill="#2a2a2a"/><rect x="21.8" y="32.2" width="7.8" height="7.8" fill="#2a2a2a"/><rect x="32.2" y="1.0" width="7.8" height="7.8" fill="#2a2a2a"/><rect x="32.2" y="11.4" width="7.8" height="7.8" fill="#2a2a2a"/><rect x="32.2" y="21.8" width="7.8" height="7.8" fill="#2a2a2a"/><rect x="32.2" y="32.2" width="7.8" height="7.8" fill="#2a2a2a"/></svg>
<svg style="position:absolute;left:2169.0px;top:1608.5px;overflow:visible;" width="43.0" height="43.0" viewBox="0 0 43.0 43.0"><rect x="1.0" y="1.0" width="7.8" height="7.8" fill="#2a2a2a"/><rect x="1.0" y="11.4" width="7.8" height="7.8" fill="#2a2a2a"/><rect x="1.0" y="21.8" width="7.8" height="7.8" fill="#2a2a2a"/><rect x="1.0" y="32.2" width="7.8" height="7.8" fill="#2a2a2a"/><rect x="11.4" y="1.0" width="7.8" height="7.8" fill="#2a2a2a"/><rect x="11.4" y="11.4" width="7.8" height="7.8" fill="#2a2a2a"/><rect x="11.4" y="21.8" width="7.8" height="7.8" fill="#2a2a2a"/><rect x="11.4" y="32.2" width="7.8" height="7.8" fill="#2a2a2a"/><rect x="21.8" y="1.0" width="7.8" height="7.8" fill="#2a2a2a"/><rect x="21.8" y="11.4" width="7.8" height="7.8" fill="#2a2a2a"/><rect x="21.8" y="21.8" width="7.8" height="7.8" fill="#2a2a2a"/><rect x="21.8" y="32.2" width="7.8" height="7.8" fill="#2a2a2a"/><rect x="32.2" y="1.0" width="7.8" height="7.8" fill="#2a2a2a"/><rect x="32.2" y="11.4" width="7.8" height="7.8" fill="#2a2a2a"/><rect x="32.2" y="21.8" width="7.8" height="7.8" fill="#2a2a2a"/><rect x="32.2" y="32.2" width="7.8" height="7.8" fill="#2a2a2a"/></svg>
<svg style="position:absolute;left:2169.0px;top:1658.7px;overflow:visible;" width="43.0" height="43.0" viewBox="0 0 43.0 43.0"><rect x="1.0" y="1.0" width="7.8" height="7.8" fill="#9a9a9a"/><rect x="1.0" y="11.4" width="7.8" height="7.8" fill="#9a9a9a"/><rect x="1.0" y="21.8" width="7.8" height="7.8" fill="#9a9a9a"/><rect x="1.0" y="32.2" width="7.8" height="7.8" fill="#f4d443"/><rect x="11.4" y="1.0" width="7.8" height="7.8" fill="#9a9a9a"/><rect x="11.4" y="11.4" width="7.8" height="7.8" fill="#9a9a9a"/><rect x="11.4" y="21.8" width="7.8" height="7.8" fill="#9a9a9a"/><rect x="11.4" y="32.2" width="7.8" height="7.8" fill="#9a9a9a"/><rect x="21.8" y="1.0" width="7.8" height="7.8" fill="#9a9a9a"/><rect x="21.8" y="11.4" width="7.8" height="7.8" fill="#f4d443"/><rect x="21.8" y="21.8" width="7.8" height="7.8" fill="#9a9a9a"/><rect x="21.8" y="32.2" width="7.8" height="7.8" fill="#9a9a9a"/><rect x="32.2" y="1.0" width="7.8" height="7.8" fill="#9a9a9a"/><rect x="32.2" y="11.4" width="7.8" height="7.8" fill="#9a9a9a"/><rect x="32.2" y="21.8" width="7.8" height="7.8" fill="#9a9a9a"/><rect x="32.2" y="32.2" width="7.8" height="7.8" fill="#9a9a9a"/></svg>
<svg style="position:absolute;left:2169.0px;top:1709.2px;overflow:visible;" width="43.0" height="43.0" viewBox="0 0 43.0 43.0"><rect x="-1" y="-1" width="44" height="44" fill="none" stroke="#dcdcdc" stroke-width="2.5"/><rect x="1.0" y="1.0" width="7.8" height="7.8" fill="#9a9a9a"/><rect x="1.0" y="11.4" width="7.8" height="7.8" fill="#9a9a9a"/><rect x="1.0" y="21.8" width="7.8" height="7.8" fill="#9a9a9a"/><rect x="1.0" y="32.2" width="7.8" height="7.8" fill="#f4d443"/><rect x="11.4" y="1.0" width="7.8" height="7.8" fill="#9a9a9a"/><rect x="11.4" y="11.4" width="7.8" height="7.8" fill="#9a9a9a"/><rect x="11.4" y="21.8" width="7.8" height="7.8" fill="#9a9a9a"/><rect x="11.4" y="32.2" width="7.8" height="7.8" fill="#9a9a9a"/><rect x="21.8" y="1.0" width="7.8" height="7.8" fill="#9a9a9a"/><rect x="21.8" y="11.4" width="7.8" height="7.8" fill="#9a9a9a"/><rect x="21.8" y="21.8" width="7.8" height="7.8" fill="#9a9a9a"/><rect x="21.8" y="32.2" width="7.8" height="7.8" fill="#f4d443"/><rect x="32.2" y="1.0" width="7.8" height="7.8" fill="#9a9a9a"/><rect x="32.2" y="11.4" width="7.8" height="7.8" fill="#9a9a9a"/><rect x="32.2" y="21.8" width="7.8" height="7.8" fill="#9a9a9a"/><rect x="32.2" y="32.2" width="7.8" height="7.8" fill="#9a9a9a"/></svg>
<svg style="position:absolute;left:2169.0px;top:1758.7px;overflow:visible;" width="43.0" height="43.0" viewBox="0 0 43.0 43.0"><rect x="1.0" y="1.0" width="7.8" height="7.8" fill="#2a2a2a"/><rect x="1.0" y="11.4" width="7.8" height="7.8" fill="#2a2a2a"/><rect x="1.0" y="21.8" width="7.8" height="7.8" fill="#2a2a2a"/><rect x="1.0" y="32.2" width="7.8" height="7.8" fill="#2a2a2a"/><rect x="11.4" y="1.0" width="7.8" height="7.8" fill="#2a2a2a"/><rect x="11.4" y="11.4" width="7.8" height="7.8" fill="#2a2a2a"/><rect x="11.4" y="21.8" width="7.8" height="7.8" fill="#2a2a2a"/><rect x="11.4" y="32.2" width="7.8" height="7.8" fill="#2a2a2a"/><rect x="21.8" y="1.0" width="7.8" height="7.8" fill="#2a2a2a"/><rect x="21.8" y="11.4" width="7.8" height="7.8" fill="#2a2a2a"/><rect x="21.8" y="21.8" width="7.8" height="7.8" fill="#2a2a2a"/><rect x="21.8" y="32.2" width="7.8" height="7.8" fill="#2a2a2a"/><rect x="32.2" y="1.0" width="7.8" height="7.8" fill="#2a2a2a"/><rect x="32.2" y="11.4" width="7.8" height="7.8" fill="#2a2a2a"/><rect x="32.2" y="21.8" width="7.8" height="7.8" fill="#2a2a2a"/><rect x="32.2" y="32.2" width="7.8" height="7.8" fill="#2a2a2a"/></svg>
<svg style="position:absolute;left:2169.0px;top:1809.2px;overflow:visible;" width="43.0" height="43.0" viewBox="0 0 43.0 43.0"><rect x="1.0" y="1.0" width="7.8" height="7.8" fill="#2a2a2a"/><rect x="1.0" y="11.4" width="7.8" height="7.8" fill="#2a2a2a"/><rect x="1.0" y="21.8" width="7.8" height="7.8" fill="#2a2a2a"/><rect x="1.0" y="32.2" width="7.8" height="7.8" fill="#2a2a2a"/><rect x="11.4" y="1.0" width="7.8" height="7.8" fill="#2a2a2a"/><rect x="11.4" y="11.4" width="7.8" height="7.8" fill="#2a2a2a"/><rect x="11.4" y="21.8" width="7.8" height="7.8" fill="#2a2a2a"/><rect x="11.4" y="32.2" width="7.8" height="7.8" fill="#2a2a2a"/><rect x="21.8" y="1.0" width="7.8" height="7.8" fill="#2a2a2a"/><rect x="21.8" y="11.4" width="7.8" height="7.8" fill="#2a2a2a"/><rect x="21.8" y="21.8" width="7.8" height="7.8" fill="#2a2a2a"/><rect x="21.8" y="32.2" width="7.8" height="7.8" fill="#2a2a2a"/><rect x="32.2" y="1.0" width="7.8" height="7.8" fill="#2a2a2a"/><rect x="32.2" y="11.4" width="7.8" height="7.8" fill="#2a2a2a"/><rect x="32.2" y="21.8" width="7.8" height="7.8" fill="#2a2a2a"/><rect x="32.2" y="32.2" width="7.8" height="7.8" fill="#2a2a2a"/></svg>
<svg style="position:absolute;left:2169.0px;top:1858.7px;overflow:visible;" width="43.0" height="11.4" viewBox="0 0 43.0 11.4"><rect x="1.0" y="1.0" width="7.8" height="7.8" fill="#2a2a2a"/><rect x="11.4" y="1.0" width="7.8" height="7.8" fill="#2a2a2a"/><rect x="21.8" y="1.0" width="7.8" height="7.8" fill="#2a2a2a"/><rect x="32.2" y="1.0" width="7.8" height="7.8" fill="#2a2a2a"/></svg>
<div style="left:2225.5px;top:1420.5px;width:146.0px;height:114.0px;border-radius:8px;background:#2c2c2c;"></div>
<div class="t" style="left:2237.5px;top:1427.8px;font-size:25px;line-height:25px;color:#f2f2f2;transform:scaleX(0.95);transform-origin:left;">MA Acc</div>
<svg style="position:absolute;left:2232.5px;top:1458.0px;" width="133.0" height="9.0" viewBox="0 0 133.0 9.0"><path d="M1.5,8 L1.5,2 L131.5,2 L131.5,8" fill="none" stroke="#3e6a8a" stroke-width="3.2"/></svg>
<div style="left:2241.5px;top:1466.0px;width:25.0px;height:20.5px;background:#3c3c3c;"></div>
<svg style="position:absolute;left:2243.5px;top:1500.5px;" width="19.0" height="19.0" viewBox="0 0 19.0 19.0"><polygon points="0.5,0.5 18.5,9.5 0.5,18.5" fill="#ffffff"/></svg>
<div class="t" style="left:2278.0px;top:1497.2px;width:40px;text-align:center;font-size:24px;line-height:24px;color:#b4b4b4;">S</div>
<div class="t" style="left:2324.2px;top:1497.2px;width:40px;text-align:center;font-size:24px;line-height:24px;color:#e4e4e4;">M</div>
<div style="left:2378.7px;top:1420.5px;width:146.0px;height:114.0px;border-radius:8px;background:#2c2c2c;"></div>
<div class="t" style="left:2390.7px;top:1427.8px;font-size:25px;line-height:25px;color:#f2f2f2;transform:scaleX(0.95);transform-origin:left;">CP Acc</div>
<svg style="position:absolute;left:2385.7px;top:1458.0px;" width="133.0" height="9.0" viewBox="0 0 133.0 9.0"><path d="M1.5,8 L1.5,2 L131.5,2 L131.5,8" fill="none" stroke="#3e6a8a" stroke-width="3.2"/></svg>
<div style="left:2394.7px;top:1466.0px;width:25.0px;height:20.5px;background:#3c3c3c;"></div>
<svg style="position:absolute;left:2396.7px;top:1500.5px;" width="19.0" height="19.0" viewBox="0 0 19.0 19.0"><polygon points="0.5,0.5 18.5,9.5 0.5,18.5" fill="#ffffff"/></svg>
<div class="t" style="left:2431.2px;top:1497.2px;width:40px;text-align:center;font-size:24px;line-height:24px;color:#b4b4b4;">S</div>
<div class="t" style="left:2477.4px;top:1497.2px;width:40px;text-align:center;font-size:24px;line-height:24px;color:#e4e4e4;">M</div>
<div style="left:2531.9px;top:1420.5px;width:146.0px;height:114.0px;border-radius:8px;background:#2c2c2c;"></div>
<div class="t" style="left:2543.9px;top:1427.8px;font-size:25px;line-height:25px;color:#f2f2f2;transform:scaleX(0.95);transform-origin:left;">CB Acc</div>
<svg style="position:absolute;left:2538.9px;top:1458.0px;" width="133.0" height="9.0" viewBox="0 0 133.0 9.0"><path d="M1.5,8 L1.5,2 L131.5,2 L131.5,8" fill="none" stroke="#3e6a8a" stroke-width="3.2"/></svg>
<div style="left:2547.9px;top:1466.0px;width:25.0px;height:20.5px;background:#3c3c3c;"></div>
<svg style="position:absolute;left:2549.9px;top:1500.5px;" width="19.0" height="19.0" viewBox="0 0 19.0 19.0"><polygon points="0.5,0.5 18.5,9.5 0.5,18.5" fill="#ffffff"/></svg>
<div class="t" style="left:2584.4px;top:1497.2px;width:40px;text-align:center;font-size:24px;line-height:24px;color:#b4b4b4;">S</div>
<div class="t" style="left:2630.6px;top:1497.2px;width:40px;text-align:center;font-size:24px;line-height:24px;color:#e4e4e4;">M</div>
<div style="left:2685.1px;top:1420.5px;width:146.0px;height:114.0px;border-radius:8px;background:#2c2c2c;"></div>
<div class="t" style="left:2697.1px;top:1427.8px;font-size:25px;line-height:25px;color:#f2f2f2;transform:scaleX(0.95);transform-origin:left;">CY Acc</div>
<svg style="position:absolute;left:2692.1px;top:1458.0px;" width="133.0" height="9.0" viewBox="0 0 133.0 9.0"><path d="M1.5,8 L1.5,2 L131.5,2 L131.5,8" fill="none" stroke="#3e6a8a" stroke-width="3.2"/></svg>
<div style="left:2701.1px;top:1466.0px;width:25.0px;height:20.5px;background:#3c3c3c;"></div>
<svg style="position:absolute;left:2703.1px;top:1500.5px;" width="19.0" height="19.0" viewBox="0 0 19.0 19.0"><polygon points="0.5,0.5 18.5,9.5 0.5,18.5" fill="#ffffff"/></svg>
<div class="t" style="left:2737.6px;top:1497.2px;width:40px;text-align:center;font-size:24px;line-height:24px;color:#b4b4b4;">S</div>
<div class="t" style="left:2783.8px;top:1497.2px;width:40px;text-align:center;font-size:24px;line-height:24px;color:#e4e4e4;">M</div>
<div style="left:2225.5px;top:1541.6px;width:146.0px;height:114.0px;border-radius:8px;background:#544f30;border:2px solid #262626;"></div>
<div class="t" style="left:2237.5px;top:1548.9px;font-size:25px;line-height:25px;color:#f2f0e0;transform:scaleX(0.95);transform-origin:left;">MA</div>
<svg style="position:absolute;left:2232.5px;top:1579.1px;" width="133.0" height="9.0" viewBox="0 0 133.0 9.0"><path d="M1.5,8 L1.5,2 L131.5,2 L131.5,8" fill="none" stroke="#6d8068" stroke-width="3.2"/></svg>
<div style="left:2241.5px;top:1587.1px;width:25.0px;height:20.5px;background:#65603f;"></div>
<svg style="position:absolute;left:2243.5px;top:1621.6px;" width="19.0" height="19.0" viewBox="0 0 19.0 19.0"><polygon points="0.5,0.5 18.5,9.5 0.5,18.5" fill="#fdf6d8"/></svg>
<div class="t" style="left:2278.0px;top:1618.3px;width:40px;text-align:center;font-size:24px;line-height:24px;color:#b8b49a;">S</div>
<div class="t" style="left:2324.2px;top:1618.3px;width:40px;text-align:center;font-size:24px;line-height:24px;color:#e8e4cc;">M</div>
<div style="left:2378.7px;top:1541.6px;width:146.0px;height:114.0px;border-radius:8px;background:#2c2c2c;"></div>
<div class="t" style="left:2390.7px;top:1548.9px;font-size:25px;line-height:25px;color:#f2f2f2;transform:scaleX(0.95);transform-origin:left;">CP</div>
<svg style="position:absolute;left:2385.7px;top:1579.1px;" width="133.0" height="9.0" viewBox="0 0 133.0 9.0"><path d="M1.5,8 L1.5,2 L131.5,2 L131.5,8" fill="none" stroke="#3e6a8a" stroke-width="3.2"/></svg>
<div style="left:2394.7px;top:1587.1px;width:25.0px;height:20.5px;background:#3c3c3c;"></div>
<svg style="position:absolute;left:2396.7px;top:1621.6px;" width="19.0" height="19.0" viewBox="0 0 19.0 19.0"><polygon points="0.5,0.5 18.5,9.5 0.5,18.5" fill="#ffffff"/></svg>
<div class="t" style="left:2431.2px;top:1618.3px;width:40px;text-align:center;font-size:24px;line-height:24px;color:#b4b4b4;">S</div>
<div class="t" style="left:2477.4px;top:1618.3px;width:40px;text-align:center;font-size:24px;line-height:24px;color:#e4e4e4;">M</div>
<div style="left:2531.9px;top:1541.6px;width:146.0px;height:114.0px;border-radius:8px;background:#2c2c2c;"></div>
<div class="t" style="left:2543.9px;top:1548.9px;font-size:25px;line-height:25px;color:#f2f2f2;transform:scaleX(0.95);transform-origin:left;">CB</div>
<svg style="position:absolute;left:2538.9px;top:1579.1px;" width="133.0" height="9.0" viewBox="0 0 133.0 9.0"><path d="M1.5,8 L1.5,2 L131.5,2 L131.5,8" fill="none" stroke="#3e6a8a" stroke-width="3.2"/></svg>
<div style="left:2547.9px;top:1587.1px;width:25.0px;height:20.5px;background:#3c3c3c;"></div>
<svg style="position:absolute;left:2549.9px;top:1621.6px;" width="19.0" height="19.0" viewBox="0 0 19.0 19.0"><polygon points="0.5,0.5 18.5,9.5 0.5,18.5" fill="#ffffff"/></svg>
<div class="t" style="left:2584.4px;top:1618.3px;width:40px;text-align:center;font-size:24px;line-height:24px;color:#b4b4b4;">S</div>
<div class="t" style="left:2630.6px;top:1618.3px;width:40px;text-align:center;font-size:24px;line-height:24px;color:#e4e4e4;">M</div>
<div style="left:2685.1px;top:1541.6px;width:146.0px;height:114.0px;border-radius:8px;background:#2c2c2c;"></div>
<div class="t" style="left:2697.1px;top:1548.9px;font-size:25px;line-height:25px;color:#f2f2f2;transform:scaleX(0.95);transform-origin:left;">CY</div>
<svg style="position:absolute;left:2692.1px;top:1579.1px;" width="133.0" height="9.0" viewBox="0 0 133.0 9.0"><path d="M1.5,8 L1.5,2 L131.5,2 L131.5,8" fill="none" stroke="#3e6a8a" stroke-width="3.2"/></svg>
<div style="left:2701.1px;top:1587.1px;width:25.0px;height:20.5px;background:#3c3c3c;"></div>
<svg style="position:absolute;left:2703.1px;top:1621.6px;" width="19.0" height="19.0" viewBox="0 0 19.0 19.0"><polygon points="0.5,0.5 18.5,9.5 0.5,18.5" fill="#ffffff"/></svg>
<div class="t" style="left:2737.6px;top:1618.3px;width:40px;text-align:center;font-size:24px;line-height:24px;color:#b4b4b4;">S</div>
<div class="t" style="left:2783.8px;top:1618.3px;width:40px;text-align:center;font-size:24px;line-height:24px;color:#e4e4e4;">M</div>
<div style="left:2225.5px;top:1662.7px;width:146.0px;height:114.0px;border-radius:8px;background:#5a3822;border:2px solid #262626;"></div>
<div class="t" style="left:2237.5px;top:1670.0px;font-size:25px;line-height:25px;color:#f8e0d0;transform:scaleX(0.95);transform-origin:left;">BD Acc</div>
<svg style="position:absolute;left:2232.5px;top:1700.2px;" width="133.0" height="9.0" viewBox="0 0 133.0 9.0"><path d="M1.5,8 L1.5,2 L131.5,2 L131.5,8" fill="none" stroke="#7a6a5e" stroke-width="3.2"/></svg>
<div style="left:2241.5px;top:1708.2px;width:25.0px;height:20.5px;background:#6b4a33;"></div>
<svg style="position:absolute;left:2243.5px;top:1742.7px;" width="19.0" height="19.0" viewBox="0 0 19.0 19.0"><polygon points="0.5,0.5 18.5,9.5 0.5,18.5" fill="#ffd8c8"/></svg>
<div class="t" style="left:2278.0px;top:1739.4px;width:40px;text-align:center;font-size:24px;line-height:24px;color:#c0a898;">S</div>
<div class="t" style="left:2324.2px;top:1739.4px;width:40px;text-align:center;font-size:24px;line-height:24px;color:#ecd8cc;">M</div>
<div style="left:2378.7px;top:1662.7px;width:146.0px;height:114.0px;border-radius:8px;background:#2c2c2c;"></div>
<div class="t" style="left:2390.7px;top:1670.0px;font-size:25px;line-height:25px;color:#f2f2f2;transform:scaleX(0.95);transform-origin:left;">SD Acc</div>
<svg style="position:absolute;left:2385.7px;top:1700.2px;" width="133.0" height="9.0" viewBox="0 0 133.0 9.0"><path d="M1.5,8 L1.5,2 L131.5,2 L131.5,8" fill="none" stroke="#3e6a8a" stroke-width="3.2"/></svg>
<div style="left:2394.7px;top:1708.2px;width:25.0px;height:20.5px;background:#3c3c3c;"></div>
<svg style="position:absolute;left:2396.7px;top:1742.7px;" width="19.0" height="19.0" viewBox="0 0 19.0 19.0"><polygon points="0.5,0.5 18.5,9.5 0.5,18.5" fill="#ffffff"/></svg>
<div class="t" style="left:2431.2px;top:1739.4px;width:40px;text-align:center;font-size:24px;line-height:24px;color:#b4b4b4;">S</div>
<div class="t" style="left:2477.4px;top:1739.4px;width:40px;text-align:center;font-size:24px;line-height:24px;color:#e4e4e4;">M</div>
<div style="left:2531.9px;top:1662.7px;width:146.0px;height:114.0px;border-radius:8px;background:#2c2c2c;"></div>
<div class="t" style="left:2543.9px;top:1670.0px;font-size:25px;line-height:25px;color:#f2f2f2;transform:scaleX(0.95);transform-origin:left;">CH Acc</div>
<svg style="position:absolute;left:2538.9px;top:1700.2px;" width="133.0" height="9.0" viewBox="0 0 133.0 9.0"><path d="M1.5,8 L1.5,2 L131.5,2 L131.5,8" fill="none" stroke="#3e6a8a" stroke-width="3.2"/></svg>
<div style="left:2547.9px;top:1708.2px;width:25.0px;height:20.5px;background:#3c3c3c;"></div>
<svg style="position:absolute;left:2549.9px;top:1742.7px;" width="19.0" height="19.0" viewBox="0 0 19.0 19.0"><polygon points="0.5,0.5 18.5,9.5 0.5,18.5" fill="#ffffff"/></svg>
<div class="t" style="left:2584.4px;top:1739.4px;width:40px;text-align:center;font-size:24px;line-height:24px;color:#b4b4b4;">S</div>
<div class="t" style="left:2630.6px;top:1739.4px;width:40px;text-align:center;font-size:24px;line-height:24px;color:#e4e4e4;">M</div>
<div style="left:2685.1px;top:1662.7px;width:146.0px;height:114.0px;border-radius:8px;background:#2c2c2c;"></div>
<div class="t" style="left:2697.1px;top:1670.0px;font-size:25px;line-height:25px;color:#f2f2f2;transform:scaleX(0.95);transform-origin:left;">OH Acc</div>
<svg style="position:absolute;left:2692.1px;top:1700.2px;" width="133.0" height="9.0" viewBox="0 0 133.0 9.0"><path d="M1.5,8 L1.5,2 L131.5,2 L131.5,8" fill="none" stroke="#3e6a8a" stroke-width="3.2"/></svg>
<div style="left:2701.1px;top:1708.2px;width:25.0px;height:20.5px;background:#3c3c3c;"></div>
<svg style="position:absolute;left:2703.1px;top:1742.7px;" width="19.0" height="19.0" viewBox="0 0 19.0 19.0"><polygon points="0.5,0.5 18.5,9.5 0.5,18.5" fill="#ffffff"/></svg>
<div class="t" style="left:2737.6px;top:1739.4px;width:40px;text-align:center;font-size:24px;line-height:24px;color:#b4b4b4;">S</div>
<div class="t" style="left:2783.8px;top:1739.4px;width:40px;text-align:center;font-size:24px;line-height:24px;color:#e4e4e4;">M</div>
<div style="left:2225.5px;top:1783.8px;width:146.0px;height:114.0px;border-radius:8px;background:#8e7f3a;border:2px solid #262626;"></div>
<div class="t" style="left:2237.5px;top:1791.1px;font-size:25px;line-height:25px;color:#fbeeaa;transform:scaleX(0.95);transform-origin:left;">BD</div>
<svg style="position:absolute;left:2232.5px;top:1821.3px;" width="133.0" height="9.0" viewBox="0 0 133.0 9.0"><path d="M1.5,8 L1.5,2 L131.5,2 L131.5,8" fill="none" stroke="#a6ad78" stroke-width="3.2"/></svg>
<div style="left:2241.5px;top:1829.3px;width:25.0px;height:20.5px;background:#9a8b4a;"></div>
<svg style="position:absolute;left:2243.5px;top:1863.8px;" width="19.0" height="19.0" viewBox="0 0 19.0 19.0"><polygon points="0.5,0.5 18.5,9.5 0.5,18.5" fill="#fdf0a0"/></svg>
<div class="t" style="left:2278.0px;top:1860.5px;width:40px;text-align:center;font-size:24px;line-height:24px;color:#d4c890;">S</div>
<div class="t" style="left:2324.2px;top:1860.5px;width:40px;text-align:center;font-size:24px;line-height:24px;color:#f2e6b0;">M</div>
<div style="left:2378.7px;top:1783.8px;width:146.0px;height:114.0px;border-radius:8px;background:#2c2c2c;border:2.5px solid #c8c8c8;"></div>
<div class="t" style="left:2390.7px;top:1791.1px;font-size:25px;line-height:25px;color:#f2f2f2;transform:scaleX(0.95);transform-origin:left;">SD</div>
<svg style="position:absolute;left:2385.7px;top:1821.3px;" width="133.0" height="9.0" viewBox="0 0 133.0 9.0"><path d="M1.5,8 L1.5,2 L131.5,2 L131.5,8" fill="none" stroke="#3e6a8a" stroke-width="3.2"/></svg>
<div style="left:2394.7px;top:1829.3px;width:25.0px;height:20.5px;background:#3c3c3c;"></div>
<svg style="position:absolute;left:2396.7px;top:1863.8px;" width="19.0" height="19.0" viewBox="0 0 19.0 19.0"><polygon points="0.5,0.5 18.5,9.5 0.5,18.5" fill="#ffffff"/></svg>
<div class="t" style="left:2431.2px;top:1860.5px;width:40px;text-align:center;font-size:24px;line-height:24px;color:#b4b4b4;">S</div>
<div class="t" style="left:2477.4px;top:1860.5px;width:40px;text-align:center;font-size:24px;line-height:24px;color:#e4e4e4;">M</div>
<div style="left:2531.9px;top:1783.8px;width:146.0px;height:114.0px;border-radius:8px;background:#8e7f3a;border:2px solid #262626;"></div>
<div class="t" style="left:2543.9px;top:1791.1px;font-size:25px;line-height:25px;color:#fbeeaa;transform:scaleX(0.95);transform-origin:left;">CH</div>
<svg style="position:absolute;left:2538.9px;top:1821.3px;" width="133.0" height="9.0" viewBox="0 0 133.0 9.0"><path d="M1.5,8 L1.5,2 L131.5,2 L131.5,8" fill="none" stroke="#a6ad78" stroke-width="3.2"/></svg>
<div style="left:2547.9px;top:1829.3px;width:25.0px;height:20.5px;background:#9a8b4a;"></div>
<svg style="position:absolute;left:2549.9px;top:1863.8px;" width="19.0" height="19.0" viewBox="0 0 19.0 19.0"><polygon points="0.5,0.5 18.5,9.5 0.5,18.5" fill="#fdf0a0"/></svg>
<div class="t" style="left:2584.4px;top:1860.5px;width:40px;text-align:center;font-size:24px;line-height:24px;color:#d4c890;">S</div>
<div class="t" style="left:2630.6px;top:1860.5px;width:40px;text-align:center;font-size:24px;line-height:24px;color:#f2e6b0;">M</div>
<div style="left:2685.1px;top:1783.8px;width:146.0px;height:114.0px;border-radius:8px;background:#733f1e;border:2px solid #262626;"></div>
<div class="t" style="left:2697.1px;top:1791.1px;font-size:25px;line-height:25px;color:#fbd8c0;transform:scaleX(0.95);transform-origin:left;">OH</div>
<svg style="position:absolute;left:2692.1px;top:1821.3px;" width="133.0" height="9.0" viewBox="0 0 133.0 9.0"><path d="M1.5,8 L1.5,2 L131.5,2 L131.5,8" fill="none" stroke="#94806e" stroke-width="3.2"/></svg>
<div style="left:2701.1px;top:1829.3px;width:25.0px;height:20.5px;background:#81502e;"></div>
<svg style="position:absolute;left:2703.1px;top:1863.8px;" width="19.0" height="19.0" viewBox="0 0 19.0 19.0"><polygon points="0.5,0.5 18.5,9.5 0.5,18.5" fill="#ffd2b8"/></svg>
<div class="t" style="left:2737.6px;top:1860.5px;width:40px;text-align:center;font-size:24px;line-height:24px;color:#d4a888;">S</div>
<div class="t" style="left:2783.8px;top:1860.5px;width:40px;text-align:center;font-size:24px;line-height:24px;color:#f0cdb8;">M</div>
<div style="left:2838.0px;top:1420.0px;width:90.0px;height:477.0px;background:#3d3d3d;"></div>
<svg style="position:absolute;left:2850.0px;top:1427.0px;" width="65.0" height="65.0" viewBox="0 0 65.0 65.0"><path d="M13.73,54.87 A29.2,29.2 0 1 1 51.27,54.87" fill="none" stroke="#5e5e5e" stroke-width="4.6"/><circle cx="32.5" cy="32.5" r="24.5" fill="#464646"/><circle cx="32.5" cy="32.5" r="21.7" fill="#2a2a2a"/><defs><linearGradient id="mk" x1="0" y1="0" x2="0" y2="1"><stop offset="0" stop-color="#b0b0b0"/><stop offset="1" stop-color="#656565"/></linearGradient></defs><circle cx="32.5" cy="32.5" r="20" fill="url(#mk)"/><rect x="29.5" y="14" width="6" height="13" fill="#f4f4f4"/><rect x="30" y="2" width="5" height="5" fill="#f98b1b"/></svg>
<div style="left:2846.0px;top:1491.0px;width:74.0px;height:293.5px;border-radius:8px;background:#0c0c0c;"></div>
<div style="left:2849.8px;top:1494.6px;width:6.5px;height:286.0px;background:#333;"></div>
<div style="left:2858.0px;top:1494.6px;width:7.0px;height:286.0px;background:#333;"></div>
<div style="left:2867.0px;top:1552.7px;width:49.2px;height:228.5px;background:#5f3813;"></div>
<div style="left:2867.0px;top:1552.7px;width:49.2px;height:3.6px;background:#f98b1b;"></div>
<div style="left:2850.0px;top:1682.5px;width:6.0px;height:3.0px;background:#7ec33a;"></div>
<div style="left:2858.5px;top:1682.5px;width:6.0px;height:3.0px;background:#7ec33a;"></div>
<div style="left:2850.0px;top:1777.0px;width:6.0px;height:4.0px;background:#3d8f2a;"></div>
<div style="left:2858.5px;top:1777.0px;width:6.0px;height:4.0px;background:#3d8f2a;"></div>
<div style="left:2847.5px;top:1793.0px;width:72.0px;height:44.5px;border-radius:7px;background:linear-gradient(#6e6e6e,#4e4e4e);border:1.5px solid #2e2e2e;"></div>
<div class="t" style="left:2853.5px;top:1801.9px;width:60px;text-align:center;font-size:32px;line-height:32px;color:#fafafa;font-weight:bold;">S</div>
<div style="left:2847.5px;top:1846.0px;width:72.0px;height:44.5px;border-radius:7px;background:linear-gradient(#6e6e6e,#4e4e4e);border:1.5px solid #2e2e2e;"></div>
<div class="t" style="left:2853.5px;top:1854.9px;width:60px;text-align:center;font-size:32px;line-height:32px;color:#fafafa;font-weight:bold;">M</div>
<div style="left:2935.0px;top:1420.0px;width:118.6px;height:477.0px;background:#3f3f3f;"></div>
<div style="left:2935.0px;top:1420.0px;width:118.6px;height:73.5px;border-radius:10px;background:#2c2c2c;"></div>
<svg style="position:absolute;left:2940.0px;top:1425.0px;" width="109.0" height="10.0" viewBox="0 0 109.0 10.0"><path d="M2,10 L2,3 L107,3 L107,10" fill="none" stroke="#3e6a8a" stroke-width="4"/></svg>
<div style="left:2949.2px;top:1434.3px;width:18.7px;height:53.6px;background:#3c3c3c;"></div>
<div style="left:2972.0px;top:1434.3px;width:18.8px;height:53.6px;background:#3c3c3c;"></div>
<div class="t" style="left:2964.5px;top:1444.8px;width:60px;text-align:center;font-size:25px;line-height:25px;color:#fafafa;">FX</div>
<svg style="position:absolute;left:2944.5px;top:1770.5px;" width="100.0" height="100.0" viewBox="0 0 100.0 100.0"><defs><linearGradient id="kg25" x1="0" y1="0" x2="0" y2="1"><stop offset="0" stop-color="#7e7e7e"/><stop offset="1" stop-color="#474747"/></linearGradient></defs><path d="M25.57,79.11 A38,38 0 1 1 74.43,79.11" fill="none" stroke="#474747" stroke-width="5"/><path d="M25.57,79.11 A38,38 0 1 1 85.23,64.24" fill="none" stroke="#f98b1b" stroke-width="5"/><circle cx="50" cy="50" r="29.2" fill="#242424"/><circle cx="50" cy="50" r="27" fill="url(#kg25)"/><line x1="56.49" y1="52.62" x2="74.57" y2="59.93" stroke="#ededed" stroke-width="5.2"/></svg>
<div class="t" style="left:2934.5px;top:1859.4px;width:120px;text-align:center;font-size:25px;line-height:25px;color:#e6e6e6;transform:scaleX(0.95);">Output</div>
<div style="left:3074.0px;top:1431.2px;width:20.2px;height:19.8px;background:#f4d443;"></div>
<svg style="position:absolute;left:3073.0px;top:1649.0px;" width="22.0" height="22.0" viewBox="0 0 22.0 22.0"><path d="M11,1 L11,21 M1,11 L21,11" stroke="#8a8a8a" stroke-width="4.2"/></svg>
<div style="left:3074.0px;top:1810.9px;width:9.0px;height:5.0px;background:#ff6e05;"></div>
<div style="left:3074.0px;top:1822.0px;width:9.0px;height:12.7px;background:#ff6e05;"></div>
<div style="left:3074.0px;top:1834.7px;width:9.0px;height:8.3px;background:#ffd83c;"></div>
<div style="left:3074.0px;top:1843.0px;width:9.0px;height:50.0px;background:linear-gradient(#94cf2f 0%,#94cf2f 62%,#3a8f2a 100%);"></div>
<div style="left:3085.0px;top:1810.9px;width:9.0px;height:5.0px;background:#ff6e05;"></div>
<div style="left:3085.0px;top:1822.0px;width:9.0px;height:12.7px;background:#ff6e05;"></div>
<div style="left:3085.0px;top:1834.7px;width:9.0px;height:8.3px;background:#ffd83c;"></div>
<div style="left:3085.0px;top:1843.0px;width:9.0px;height:50.0px;background:linear-gradient(#94cf2f 0%,#94cf2f 62%,#3a8f2a 100%);"></div>
<div style="left:45.8px;top:1961.0px;width:10.0px;height:28.0px;"></div>
<svg style="position:absolute;left:44.0px;top:1960.0px;" width="14.0" height="30.0" viewBox="0 0 14.0 30.0"><circle cx="7" cy="4" r="3.3" fill="#c8c8c8"/><path d="M2.5,10 L9.5,10 L9.5,24 Q9.5,27 7,27 Q3.5,27 3.5,24 L3.5,13 L2.5,13Z" fill="#c8c8c8"/></svg>
<div style="left:94.0px;top:1954.0px;width:4.0px;height:44.6px;background:#888;"></div>
<div class="t" style="left:131.4px;top:1962.8px;font-size:25px;line-height:25px;color:#e6e6e6;transform:scaleX(0.937);transform-origin:left;">ARRANGE</div>
<div class="t" style="left:280.6px;top:1962.8px;font-size:25px;line-height:25px;color:#e6e6e6;transform:scaleX(1.0);transform-origin:left;">MIX</div>
<div class="t" style="left:361.0px;top:1962.8px;font-size:25px;line-height:25px;color:#f98b1b;transform:scaleX(0.94);transform-origin:left;">EDIT</div>
<div style="left:448.0px;top:1954.0px;width:4.0px;height:44.6px;background:#888;"></div>
<svg style="position:absolute;left:478.0px;top:1957.8px;" width="35.0" height="35.0" viewBox="0 0 35.0 35.0"><rect x="1.5" y="1.5" width="32" height="31" rx="6" fill="#6b4824" stroke="#f98b1b" stroke-width="3"/><path d="M7,1.5 L10,1.5 L10,32.5 L7,32.5 Q1.5,32.5 1.5,27 L1.5,7 Q1.5,1.5 7,1.5Z" fill="#f98b1b"/></svg>
<svg style="position:absolute;left:546.0px;top:1959.0px;" width="36.0" height="32.0" viewBox="0 0 36.0 32.0"><g fill="#c8c8c8"><rect x="5" y="0" width="2.6" height="32"/><rect x="16.7" y="4" width="2.6" height="28"/><rect x="28.4" y="0" width="2.6" height="28"/></g><g fill="#2d2d2d" stroke="#c8c8c8" stroke-width="2.4"><rect x="1.5" y="10" width="9.5" height="6" rx="1"/><rect x="13" y="19" width="9.5" height="6" rx="1"/><rect x="24.7" y="6" width="9.5" height="6" rx="1"/></g></svg>
<svg style="position:absolute;left:3085.0px;top:1959.0px;" width="32.0" height="32.0" viewBox="0 0 32.0 32.0"><circle cx="12.5" cy="12.5" r="9.5" fill="none" stroke="#c4c4c4" stroke-width="3.4"/><line x1="19.5" y1="19.5" x2="28" y2="28" stroke="#c4c4c4" stroke-width="4" stroke-linecap="round"/></svg>
<svg style="position:absolute;left:3157.0px;top:1960.0px;" width="27.0" height="31.0" viewBox="0 0 27.0 31.0"><defs><linearGradient id="dg" x1="0" y1="0" x2="1" y2="1"><stop offset="0" stop-color="#9a9a9a"/><stop offset=".55" stop-color="#c8c8c8"/><stop offset="1" stop-color="#9c9c9c"/></linearGradient></defs><path d="M3,0.5 L14,0.5 L26,11.5 L26,27.5 Q26,30 23.5,30 L3,30 Q0.5,30 0.5,27.5 L0.5,3 Q0.5,0.5 3,0.5Z" fill="url(#dg)"/><path d="M14,0.5 L26,11.5 L14,11.5Z" fill="#d4d4d4"/></svg>
<svg style="position:absolute;left:3223.0px;top:1957.0px;" width="32.0" height="38.0" viewBox="0 0 32.0 38.0"><path d="M6,1 L26,1 Q31,1 31,8 L31,30 Q31,37 24,37 L8,37 Q1,37 1,30 L1,8 Q1,1 6,1Z" fill="#c4c4c4"/><circle cx="16" cy="8" r="2.6" fill="#2d2d2d"/><circle cx="16" cy="22" r="9" fill="#2d2d2d"/><circle cx="16" cy="22" r="3.6" fill="#c4c4c4"/></svg>
<svg style="position:absolute;left:3292.0px;top:1960.0px;" width="30.0" height="31.0" viewBox="0 0 30.0 31.0"><path d="M8,2 Q8,0 10,0 Q12,0 12,2 L12,12 L14,12 L14,7 Q14,5 16,5 Q18,5 18,7 L18,12 L19,12 L19,8 Q19,6 21,6 Q23,6 23,8 L23,13 L24,13 L24,10 Q24,8 26,8 Q28,8 28,10 L28,26 Q28,30 24,30 L13,30 Q10,30 8,27 L1,16 Q0,14 2,13 Q4,12 6,14 L8,17Z" fill="#c4c4c4"/></svg>
<div style="left:3354.0px;top:1953.7px;width:4.0px;height:45.0px;background:#888;"></div>
<svg style="position:absolute;left:3388.0px;top:1960.0px;" width="31.0" height="30.0" viewBox="0 0 31.0 30.0"><rect x="0" y="0" width="31" height="30" fill="#c4c4c4"/><rect x="6.5" y="0" width="4" height="17" fill="#2d2d2d"/><rect x="20.5" y="0" width="4" height="17" fill="#2d2d2d"/><rect x="8.5" y="17" width="1.5" height="13" fill="#2d2d2d"/><rect x="22.5" y="17" width="1.5" height="13" fill="#2d2d2d"/></svg>
<div style="left:2596px;top:338px;width:689px;height:689px;box-shadow:0 14px 55px rgba(0,0,0,0.6);overflow:hidden;"><svg width="689" height="689" viewBox="0 0 689 689" style="position:absolute;left:0;top:0"><defs><clipPath id="cA"><polygon points="-10,-10 301.7,-10 -10,522.0"/></clipPath><clipPath id="cB"><polygon points="256.6,51.8 -1444.4,3051.8 1336.6,3051.8"/></clipPath><clipPath id="cC"><polygon points="256.6,51.8 238.0,0 300,0 720,394.4 720,341.8 378.1,396.6"/></clipPath><clipPath id="cD"><polygon points="287.3,-10 800,-10 800,469.2"/></clipPath></defs><rect x="0" y="0" width="689" height="689" fill="#ffed1f"/><g clip-path="url(#cA)"><polygon points="-5263.3,464.4 -1426.7,2639.7 1532.7,-2579.7 -2303.9,-4755.0" fill="#fc5d38"/><polygon points="-1426.7,2639.7 -1373.0,2670.2 1586.4,-2549.2 1532.7,-2579.7" fill="#fdb22b"/><polygon points="-1373.0,2670.2 -1320.0,2700.2 1639.4,-2519.2 1586.4,-2549.2" fill="#ffed1f"/><polygon points="-1320.0,2700.2 -1263.3,2732.4 1696.1,-2487.0 1639.4,-2519.2" fill="#ffffff"/></g><g clip-path="url(#cB)"><polygon points="-3410.2,4416.1 888.7,2868.6 -1143.6,-2776.8 -5442.5,-1229.2" fill="#fc5d38"/><polygon points="888.7,2868.6 921.4,2856.8 -1110.9,-2788.6 -1143.6,-2776.8" fill="#fdb22b"/><polygon points="921.4,2856.8 972.8,2838.3 -1059.5,-2807.0 -1110.9,-2788.6" fill="#ffed1f"/><polygon points="972.8,2838.3 995.8,2830.0 -1036.5,-2815.3 -1059.5,-2807.0" fill="#ffffff"/><polygon points="995.8,2830.0 1051.6,2809.9 -980.7,-2835.4 -1036.5,-2815.3" fill="#fc5d38"/><polygon points="1051.6,2809.9 1111.8,2788.2 -920.5,-2857.1 -980.7,-2835.4" fill="#fdb22b"/><polygon points="1111.8,2788.2 1170.2,2767.2 -862.1,-2878.1 -920.5,-2857.1" fill="#ffed1f"/><polygon points="1170.2,2767.2 1226.9,2746.8 -805.5,-2898.5 -862.1,-2878.1" fill="#ffffff"/></g><clipPath id="cArc"><polygon points="-10,504.4 286.0,-10 -52.6,-10 203.0,700 -10,700"/></clipPath><g clip-path="url(#cArc)"><circle cx="-105" cy="785" r="302" fill="#f7f6dc"/><circle cx="-105" cy="785" r="253" fill="#ffed1f"/><circle cx="-105" cy="785" r="198" fill="#fdb22b"/><circle cx="-105" cy="785" r="150" fill="#ffed1f"/></g><clipPath id="cC2"><polygon points="256.6,51.8 286.0,0.0 298.0,0.0 672.0,349.5 380.6,396.1"/></clipPath><g clip-path="url(#cC2)"><polygon points="-3742.4,-4401.2 -2952.6,534.4 2972.0,-413.5 2182.3,-5349.2" fill="#fc5d38"/><polygon points="-2952.6,534.4 -2949.1,556.8 2975.6,-391.1 2972.0,-413.5" fill="#fdb22b"/><polygon points="-2949.1,556.8 -2946.7,571.5 2977.9,-376.5 2975.6,-391.1" fill="#ffed1f"/><polygon points="-2946.7,571.5 -2942.4,598.8 2982.3,-349.2 2977.9,-376.5" fill="#ffffff"/><polygon points="-2942.4,598.8 -2936.7,633.9 2987.9,-314.1 2982.3,-349.2" fill="#fdb22b"/><polygon points="-2936.7,633.9 -2926.1,700.2 2998.5,-247.8 2987.9,-314.1" fill="#ffed1f"/><polygon points="-2926.1,700.2 -2915.6,766.0 3009.0,-181.9 2998.5,-247.8" fill="#ffffff"/><polygon points="-2915.6,766.0 -2911.1,794.3 3013.6,-153.7 3009.0,-181.9" fill="#fc5d38"/><polygon points="-2911.1,794.3 -2904.3,836.7 3020.4,-111.3 3013.6,-153.7" fill="#fdb22b"/><polygon points="-2904.3,836.7 -2896.8,883.5 3027.8,-64.5 3020.4,-111.3" fill="#ffed1f"/><polygon points="-2896.8,883.5 -2891.0,919.6 3033.6,-28.4 3027.8,-64.5" fill="#ffffff"/></g><g clip-path="url(#cD)"><polygon points="2330.7,1899.8 2381.1,1845.9 -2002.5,-2251.0 -2052.9,-2197.1" fill="#ffffff"/><polygon points="2381.1,1845.9 2432.4,1791.0 -1951.2,-2305.8 -2002.5,-2251.0" fill="#ffed1f"/><polygon points="2432.4,1791.0 2483.7,1736.1 -1899.9,-2360.7 -1951.2,-2305.8" fill="#fdb22b"/><polygon points="2483.7,1736.1 4522.9,-445.9 139.3,-4542.7 -1899.9,-2360.7" fill="#fc5d38"/></g><clipPath id="cE"><polygon points="380.6,396.1 720.0,341.8 720.0,720.0 497.2,720.0"/></clipPath><g clip-path="url(#cE)"><polygon points="-378.7,4621.3 2139.8,2102.8 -2102.8,-2139.8 -4621.3,378.7" fill="#ffed1f"/><polygon points="2139.8,2102.8 2159.8,2082.8 -2082.8,-2159.8 -2102.8,-2139.8" fill="#fdb22b"/><polygon points="2159.8,2082.8 2187.8,2054.8 -2054.8,-2187.8 -2082.8,-2159.8" fill="#fc5d38"/><polygon points="2187.8,2054.8 2202.3,2040.3 -2040.3,-2202.3 -2054.8,-2187.8" fill="#ffed1f"/><polygon points="2202.3,2040.3 2219.8,2022.8 -2022.8,-2219.8 -2040.3,-2202.3" fill="#fdb22b"/><polygon points="2219.8,2022.8 2231.3,2011.3 -2011.3,-2231.3 -2022.8,-2219.8" fill="#fc5d38"/><polygon points="2231.3,2011.3 4621.3,-378.7 378.7,-4621.3 -2011.3,-2231.3" fill="#ffed1f"/></g><clipPath id="cE2"><polygon points="422.0,511.0 536.5,396.5 720.0,580.0 720.0,720.0 497.2,720.0"/></clipPath><g clip-path="url(#cE)"><g clip-path="url(#cE2)"><polygon points="-4621.3,-378.7 -1703.8,2538.8 2538.8,-1703.8 -378.7,-4621.3" fill="#ffed1f"/><polygon points="-1703.8,2538.8 -1686.3,2556.3 2556.3,-1686.3 2538.8,-1703.8" fill="#fdb22b"/><polygon points="-1686.3,2556.3 -1625.8,2616.8 2616.8,-1625.8 2556.3,-1686.3" fill="#fc5d38"/><polygon points="-1625.8,2616.8 -1596.3,2646.3 2646.3,-1596.3 2616.8,-1625.8" fill="#fdb22b"/><polygon points="-1596.3,2646.3 -1566.3,2676.3 2676.3,-1566.3 2646.3,-1596.3" fill="#ffed1f"/><polygon points="-1566.3,2676.3 -1536.3,2706.3 2706.3,-1536.3 2676.3,-1566.3" fill="#ffffff"/><polygon points="-1536.3,2706.3 -1523.8,2718.8 2718.8,-1523.8 2706.3,-1536.3" fill="#fc5d38"/><polygon points="-1523.8,2718.8 -1501.3,2741.3 2741.3,-1501.3 2718.8,-1523.8" fill="#fdb22b"/><polygon points="-1501.3,2741.3 -1476.3,2766.3 2766.3,-1476.3 2741.3,-1501.3" fill="#ffed1f"/><polygon points="-1476.3,2766.3 -1451.3,2791.3 2791.3,-1451.3 2766.3,-1476.3" fill="#ffffff"/><polygon points="-1451.3,2791.3 -1428.8,2813.8 2813.8,-1428.8 2791.3,-1451.3" fill="#fdb22b"/><polygon points="-1428.8,2813.8 -1401.3,2841.3 2841.3,-1401.3 2813.8,-1428.8" fill="#ffed1f"/><polygon points="-1401.3,2841.3 -1371.3,2871.3 2871.3,-1371.3 2841.3,-1401.3" fill="#ffffff"/><polygon points="-1371.3,2871.3 378.7,4621.3 4621.3,378.7 2871.3,-1371.3" fill="#ffed1f"/></g></g><clipPath id="cCp"><polygon points="612,352 720,341.8 720,577 577,434"/></clipPath><g clip-path="url(#cCp)"><polygon points="-2891.0,919.6 -2889.5,929.3 3035.2,-18.6 3033.6,-28.4" fill="#fc5d38"/><polygon points="-2889.5,929.3 -2886.8,945.9 3037.8,-2.1 3035.2,-18.6" fill="#fdb22b"/><polygon points="-2886.8,945.9 -2884.6,959.5 3040.0,11.6 3037.8,-2.1" fill="#ffed1f"/><polygon points="-2884.6,959.5 -2882.4,973.2 3042.2,25.2 3040.0,11.6" fill="#ffffff"/><polygon points="-2882.4,973.2 -2881.4,980.0 3043.3,32.1 3042.2,25.2" fill="#fc5d38"/><polygon points="-2881.4,980.0 -2879.5,991.7 3045.2,43.8 3043.3,32.1" fill="#fdb22b"/><polygon points="-2879.5,991.7 -2877.6,1003.4 3047.0,55.5 3045.2,43.8" fill="#ffed1f"/><polygon points="-2877.6,1003.4 -2875.0,1020.0 3049.7,72.1 3047.0,55.5" fill="#ffffff"/><polygon points="-2875.0,1020.0 -2182.3,5349.2 3742.4,4401.2 3049.7,72.1" fill="#ffed1f"/></g><clipPath id="cF"><polygon points="601.7,458.7 720,577 720,439.8"/></clipPath><g clip-path="url(#cF)"><polygon points="-2056.3,-2186.3 -2046.3,-2196.3 2196.3,2046.3 2186.3,2056.3" fill="#ffffff"/><polygon points="-2046.3,-2196.3 -2037.8,-2204.8 2204.8,2037.8 2196.3,2046.3" fill="#ffed1f"/><polygon points="-2037.8,-2204.8 -2030.8,-2211.8 2211.8,2030.8 2204.8,2037.8" fill="#fdb22b"/><polygon points="-2030.8,-2211.8 -2023.8,-2218.8 2218.8,2023.8 2211.8,2030.8" fill="#fc5d38"/><polygon points="-2023.8,-2218.8 -2014.3,-2228.3 2228.3,2014.3 2218.8,2023.8" fill="#ffed1f"/><polygon points="-2014.3,-2228.3 -2005.3,-2237.3 2237.3,2005.3 2228.3,2014.3" fill="#ffffff"/><polygon points="-2005.3,-2237.3 -1996.3,-2246.3 2246.3,1996.3 2237.3,2005.3" fill="#ffed1f"/><polygon points="-1996.3,-2246.3 -1988.3,-2254.3 2254.3,1988.3 2246.3,1996.3" fill="#fdb22b"/><polygon points="-1988.3,-2254.3 378.7,-4621.3 4621.3,-378.7 2254.3,1988.3" fill="#fc5d38"/></g><path fill-rule="evenodd" fill="#1d1d1d" d="M125,230.7 L193,230.7 C220,230.7 230.5,245 229.5,262 C228.5,275 220,283 210,287 C224,291 232.5,302 231.5,318 C230.5,335 216,344.2 192,344.2 L125,344.2 Z M161,259.4 L183,259.4 C189,259.4 191,263 191,268 C191,273 189,276.3 183,276.3 L161,276.3 Z M161,298.2 L185,298.2 C191,298.2 193.4,302 193.4,307.3 C193.4,313 191,316.5 185,316.5 L161,316.5 Z"/><path fill-rule="evenodd" fill="#1d1d1d" d="M280,230 L316.6,230 L364,344.2 L324,344.2 L318,328.7 L278.5,328.7 L272.8,344.2 L232.7,344.2 Z M298.4,274 L309,302.4 L287.8,302.4 Z"/><text x="363" y="341" font-family="Liberation Sans" font-weight="bold" font-size="158" fill="#1d1d1d" stroke="#1d1d1d" stroke-width="10" stroke-linejoin="round">S</text><text x="470" y="341" font-family="Liberation Sans" font-weight="bold" font-size="158" fill="#1d1d1d" stroke="#1d1d1d" stroke-width="10" stroke-linejoin="round">S</text><rect x="122.9" y="403.8" width="75.9" height="29" fill="#1d1d1d"/><path fill-rule="evenodd" fill="#1d1d1d" d="M212,412.4 A55,59 0 1 0 322,412.4 A55,59 0 1 0 212,412.4 Z M249.6,412.4 A17.4,26.7 0 1 0 284.4,412.4 A17.4,26.7 0 1 0 249.6,412.4 Z"/><path fill-rule="evenodd" fill="#1d1d1d" d="M332,383 A45.8,29.5 0 1 0 423.6,383 A45.8,29.5 0 1 0 332,383 Z M366,390.2 A11.9,11.4 0 1 0 389.8,390.2 A11.9,11.4 0 1 0 366,390.2 Z"/><path fill-rule="evenodd" fill="#1d1d1d" d="M328.4,438.2 A49.6,33.3 0 1 0 427.6,438.2 A49.6,33.3 0 1 0 328.4,438.2 Z M364.4,434 A13.5,12 0 1 0 391.5,434 A13.5,12 0 1 0 364.4,434 Z"/><rect x="350" y="400" width="56" height="20" fill="#1d1d1d"/><circle cx="378" cy="390.2" r="11.6" fill="#ffffff"/></svg></div>
</body></html>
